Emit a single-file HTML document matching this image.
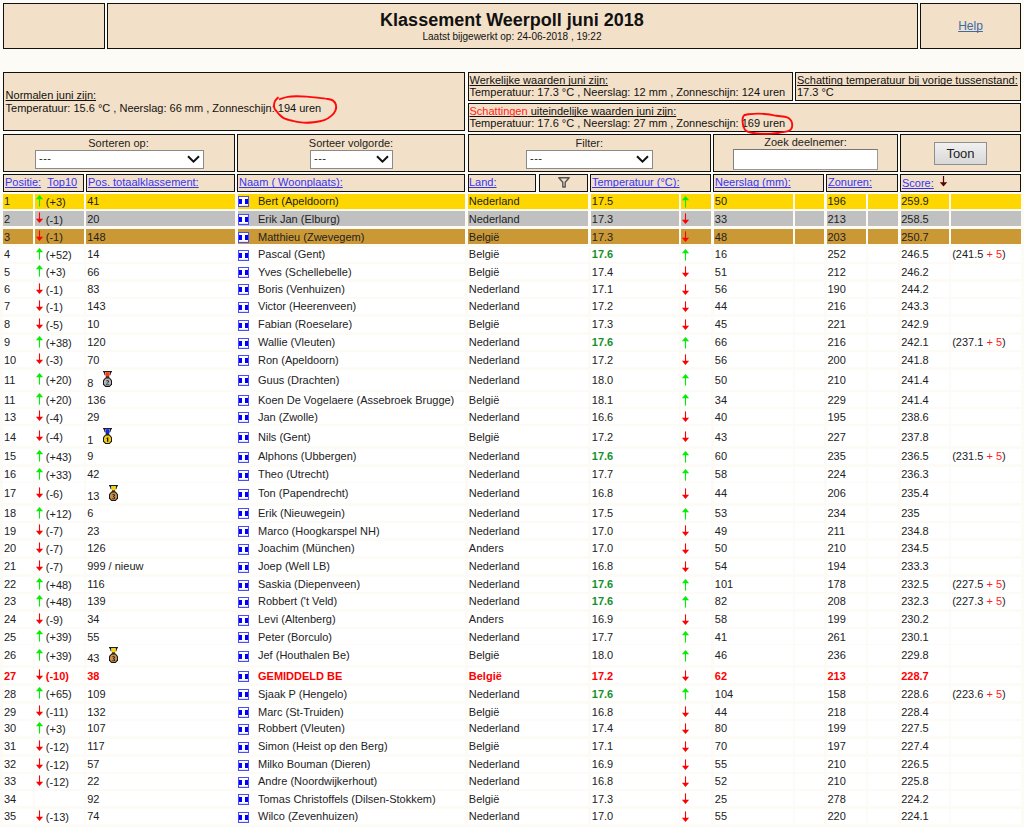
<!DOCTYPE html>
<html><head><meta charset="utf-8"><title>Klassement Weerpoll juni 2018</title>
<style>
html,body{margin:0;padding:0}
body{width:1024px;height:827px;overflow:hidden;background:#FDFBF6;font-family:"Liberation Sans", sans-serif;position:relative}
.b{position:absolute;box-sizing:border-box;border:1px solid #111}
.r{position:absolute}
.t{position:absolute;white-space:nowrap;font-family:"Liberation Sans", sans-serif}
.t a{text-decoration:underline;color:inherit}
.t{text-decoration-skip-ink:none}
.sel{position:absolute;box-sizing:border-box;background:#fff;border:1px solid #8a8a8a;font-size:11px;color:#222;font-family:"Liberation Sans", sans-serif}
.inp{position:absolute;box-sizing:border-box;background:#fff;border:1px solid #999;border-top-color:#777;border-left-color:#808080}
.btn{position:absolute;box-sizing:border-box;border:1px solid #8f8f8f;background:linear-gradient(#f0f0f0,#d8d8d8);font-size:13px;line-height:21px;text-align:center;color:#222;font-family:"Liberation Sans", sans-serif}
</style></head><body>
<div class="b" style="left:3px;top:3px;width:102px;height:46px;background:#F3E0C8;border-color:#111;"></div>
<div class="b" style="left:107px;top:3px;width:811px;height:46px;background:#F3E0C8;border-color:#111;"></div>
<div class="b" style="left:920px;top:3px;width:101px;height:46px;background:#F3E0C8;border-color:#111;"></div>
<div class="t" style="left:212.0px;top:10px;width:600px;text-align:center;font-size:18px;line-height:20px;color:#111;font-weight:bold;">Klassement Weerpoll juni 2018</div>
<div class="t" style="left:312.0px;top:30.5px;width:400px;text-align:center;font-size:10px;line-height:11px;color:#111;">Laatst bijgewerkt op: 24-06-2018 , 19:22</div>
<div class="t" style="left:920.5px;top:19px;width:100px;text-align:center;font-size:12px;line-height:14px;color:#3A6BA8;text-decoration:underline;">Help</div>
<div class="b" style="left:3px;top:72px;width:462px;height:59px;background:#F3E0C8;border-color:#111;"></div>
<div class="t" style="left:5.6px;top:89px;font-size:11px;line-height:12px;color:#111;text-decoration:underline;">Normalen juni zijn:</div>
<div class="t" style="left:5.6px;top:102px;font-size:11px;line-height:12px;color:#111;">Temperatuur: 15.6 °C , Neerslag: 66 mm , Zonneschijn: 194 uren</div>
<div class="b" style="left:468px;top:72px;width:325px;height:29px;background:#F3E0C8;border-color:#111;"></div>
<div class="t" style="left:469.5px;top:74px;font-size:11px;line-height:12px;color:#111;text-decoration:underline;">Werkelijke waarden juni zijn:</div>
<div class="t" style="left:469.5px;top:86px;font-size:11px;line-height:12px;color:#111;">Temperatuur: 17.3 °C , Neerslag: 12 mm , Zonneschijn: 124 uren</div>
<div class="b" style="left:795px;top:72px;width:226px;height:29px;background:#F3E0C8;border-color:#111;"></div>
<div class="t" style="left:797px;top:74px;font-size:11px;line-height:12px;color:#111;text-decoration:underline;">Schatting temperatuur bij vorige tussenstand:</div>
<div class="t" style="left:797px;top:86px;font-size:11px;line-height:12px;color:#111;">17.3 °C</div>
<div class="b" style="left:468px;top:103px;width:553px;height:29px;background:#F3E0C8;border-color:#111;"></div>
<div class="t" style="left:469.5px;top:105px;font-size:11px;line-height:12px;color:#111;text-decoration:underline;"><span style="color:#FF2020">Schattingen</span> uiteindelijke waarden juni zijn:</div>
<div class="t" style="left:469.5px;top:117px;font-size:11px;line-height:12px;color:#111;">Temperatuur: 17.6 °C , Neerslag: 27 mm , Zonneschijn: 169 uren</div>
<div class="b" style="left:3px;top:134px;width:232px;height:38px;background:#F3E0C8;border-color:#111;"></div>
<div class="t" style="left:-31.5px;top:137px;width:300px;text-align:center;font-size:11px;line-height:12px;color:#222;">Sorteren op:</div>
<div class="sel" style="left:35px;top:150px;width:169px;height:19px"><span style="position:absolute;left:3px;top:0px;line-height:14px;letter-spacing:0.5px">---</span><svg style="position:absolute;right:3.5px;top:4px" width="13" height="8" viewBox="0 0 13 8"><path d="M1 1.2 L6.5 6.6 L12 1.2" fill="none" stroke="#111" stroke-width="2"/></svg></div>
<div class="b" style="left:237px;top:134px;width:228px;height:38px;background:#F3E0C8;border-color:#111;"></div>
<div class="t" style="left:201.0px;top:137px;width:300px;text-align:center;font-size:11px;line-height:12px;color:#222;">Sorteer volgorde:</div>
<div class="sel" style="left:310px;top:150px;width:83px;height:19px"><span style="position:absolute;left:3px;top:0px;line-height:14px;letter-spacing:0.5px">---</span><svg style="position:absolute;right:3.5px;top:4px" width="13" height="8" viewBox="0 0 13 8"><path d="M1 1.2 L6.5 6.6 L12 1.2" fill="none" stroke="#111" stroke-width="2"/></svg></div>
<div class="b" style="left:468px;top:134px;width:243px;height:38px;background:#F3E0C8;border-color:#111;"></div>
<div class="t" style="left:439.29999999999995px;top:137px;width:300px;text-align:center;font-size:11px;line-height:12px;color:#222;">Filter:</div>
<div class="sel" style="left:526px;top:150px;width:127px;height:19px"><span style="position:absolute;left:3px;top:0px;line-height:14px;letter-spacing:0.5px">---</span><svg style="position:absolute;right:3.5px;top:4px" width="13" height="8" viewBox="0 0 13 8"><path d="M1 1.2 L6.5 6.6 L12 1.2" fill="none" stroke="#111" stroke-width="2"/></svg></div>
<div class="b" style="left:713px;top:134px;width:185px;height:38px;background:#F3E0C8;border-color:#111;"></div>
<div class="t" style="left:655.5px;top:136px;width:300px;text-align:center;font-size:11px;line-height:12px;color:#222;">Zoek deelnemer:</div>
<div class="inp" style="left:733px;top:149px;width:145px;height:21px"></div>
<div class="b" style="left:900px;top:134px;width:121px;height:38px;background:#F3E0C8;border-color:#111;"></div>
<div class="btn" style="left:934px;top:142px;width:53px;height:23px">Toon</div>
<div class="b" style="left:3px;top:174px;width:81px;height:18px;background:#F3E0C8;border-color:#111;"></div>
<div class="t" style="left:5px;top:176px;font-size:11px;line-height:12px;color:#3535F8;"><a>Positie:</a>&nbsp;&nbsp;<a>Top10</a></div>
<div class="b" style="left:86px;top:174px;width:149px;height:18px;background:#F3E0C8;border-color:#111;"></div>
<div class="t" style="left:88px;top:176px;font-size:11px;line-height:12px;color:#3535F8;text-decoration:underline;">Pos. totaalklassement:</div>
<div class="b" style="left:237px;top:174px;width:228px;height:18px;background:#F3E0C8;border-color:#111;"></div>
<div class="t" style="left:239px;top:176px;font-size:11px;line-height:12px;color:#3535F8;text-decoration:underline;">Naam ( Woonplaats):</div>
<div class="b" style="left:468px;top:174px;width:68px;height:18px;background:#F3E0C8;border-color:#111;"></div>
<div class="t" style="left:469px;top:176px;font-size:11px;line-height:12px;color:#3535F8;text-decoration:underline;">Land:</div>
<div class="b" style="left:539px;top:174px;width:49px;height:18px;background:#F3E0C8;border-color:#111;"></div>
<svg class="r" style="left:558px;top:177px" width="12" height="11" viewBox="0 0 12 11"><path d="M0.8 0.8 H11.2 L7.2 5.2 V10 H4.8 V5.2 Z" fill="none" stroke="#555" stroke-width="1.4" stroke-linejoin="round"/></svg>
<div class="b" style="left:590px;top:174px;width:121px;height:18px;background:#F3E0C8;border-color:#111;"></div>
<div class="t" style="left:592px;top:176px;font-size:11px;line-height:12px;color:#3535F8;text-decoration:underline;">Temperatuur (°C):</div>
<div class="b" style="left:713px;top:174px;width:111px;height:18px;background:#F3E0C8;border-color:#111;"></div>
<div class="t" style="left:715px;top:176px;font-size:11px;line-height:12px;color:#3535F8;text-decoration:underline;">Neerslag (mm):</div>
<div class="b" style="left:826px;top:174px;width:72px;height:18px;background:#F3E0C8;border-color:#111;"></div>
<div class="t" style="left:828px;top:176px;font-size:11px;line-height:12px;color:#3535F8;text-decoration:underline;">Zonuren:</div>
<div class="b" style="left:900px;top:174px;width:121px;height:18px;background:#F3E0C8;border-color:#111;"></div>
<div class="t" style="left:902px;top:177px;font-size:11px;line-height:12px;color:#3535F8;text-decoration:underline;">Score:</div>
<svg class="r" style="left:939px;top:176px" width="9" height="11" viewBox="0 0 9 11"><path d="M4.5 0 V7" stroke="#5A0000" stroke-width="1.2"/><path d="M0.8 6.3 L4.5 10.6 L8.2 6.3 Z" fill="#5A0000"/></svg>
<div class="r" style="left:3px;top:194px;width:30.0px;height:15px;background:#FFD700;"></div>
<div class="r" style="left:35px;top:194px;width:49.0px;height:15px;background:#FFD700;"></div>
<div class="r" style="left:86px;top:194px;width:148.5px;height:15px;background:#FFD700;"></div>
<div class="r" style="left:237.5px;top:194px;width:227.5px;height:15px;background:#FFD700;"></div>
<div class="r" style="left:468px;top:194px;width:120.0px;height:15px;background:#FFD700;"></div>
<div class="r" style="left:590.8px;top:194px;width:88.5px;height:15px;background:#FFD700;"></div>
<div class="r" style="left:681.2px;top:194px;width:29.5px;height:15px;background:#FFD700;"></div>
<div class="r" style="left:713.7px;top:194px;width:79.5px;height:15px;background:#FFD700;"></div>
<div class="r" style="left:795.2px;top:194px;width:28.5px;height:15px;background:#FFD700;"></div>
<div class="r" style="left:826.6px;top:194px;width:39.5px;height:15px;background:#FFD700;"></div>
<div class="r" style="left:868.3px;top:194px;width:29.5px;height:15px;background:#FFD700;"></div>
<div class="r" style="left:900.5px;top:194px;width:48.5px;height:15px;background:#FFD700;"></div>
<div class="r" style="left:951.3px;top:194px;width:69.5px;height:15px;background:#FFD700;"></div>
<div class="t" style="left:4px;top:195px;font-size:11px;line-height:12px;color:#222;">1</div>
<svg class="r" style="left:35px;top:195px" width="9" height="12" viewBox="0 0 9 12"><path d="M4.5 3 V11.6" stroke="#00F000" stroke-width="1.1"/><path d="M0.9 4.3 L4.5 0.1 L8.1 4.3 Z" fill="#00F000"/></svg>
<div class="t" style="left:45.8px;top:196px;font-size:11px;line-height:12px;color:#222;">(+3)</div>
<div class="t" style="left:87.2px;top:195px;font-size:11px;line-height:12px;color:#222;">41</div>
<svg class="r" style="left:238px;top:196px" width="11" height="11" viewBox="0 0 11 11" shape-rendering="crispEdges"><rect x="0" y="0" width="11" height="11" fill="#4A4AFF"/><rect x="1" y="1" width="9" height="9" fill="#0000FA"/><rect x="1" y="1" width="9" height="2" fill="#fff"/><rect x="1" y="2" width="1" height="1" fill="#E8E8FF"/><rect x="9" y="2" width="1" height="1" fill="#E8E8FF"/><rect x="4" y="3" width="3" height="5" fill="#fff"/><rect x="1" y="8" width="9" height="2" fill="#fff"/><rect x="1" y="9" width="9" height="1" fill="#E0E0FF"/></svg>
<div class="t" style="left:258px;top:195px;font-size:11px;line-height:12px;color:#222;">Bert (Apeldoorn)</div>
<div class="t" style="left:468.8px;top:195px;font-size:11px;line-height:12px;color:#222;">Nederland</div>
<div class="t" style="left:591.8px;top:195px;font-size:11px;line-height:12px;color:#222;">17.5</div>
<svg class="r" style="left:681px;top:196px" width="9" height="12" viewBox="0 0 9 12"><path d="M4.5 3 V11.6" stroke="#00F000" stroke-width="1.1"/><path d="M0.9 4.3 L4.5 0.1 L8.1 4.3 Z" fill="#00F000"/></svg>
<div class="t" style="left:714.8px;top:195px;font-size:11px;line-height:12px;color:#222;">50</div>
<div class="t" style="left:827.5px;top:195px;font-size:11px;line-height:12px;color:#222;">196</div>
<div class="t" style="left:901.2px;top:195px;font-size:11px;line-height:12px;color:#222;">259.9</div>
<div class="r" style="left:3px;top:211px;width:30.0px;height:15px;background:#C0C0C0;"></div>
<div class="r" style="left:35px;top:211px;width:49.0px;height:15px;background:#C0C0C0;"></div>
<div class="r" style="left:86px;top:211px;width:148.5px;height:15px;background:#C0C0C0;"></div>
<div class="r" style="left:237.5px;top:211px;width:227.5px;height:15px;background:#C0C0C0;"></div>
<div class="r" style="left:468px;top:211px;width:120.0px;height:15px;background:#C0C0C0;"></div>
<div class="r" style="left:590.8px;top:211px;width:88.5px;height:15px;background:#C0C0C0;"></div>
<div class="r" style="left:681.2px;top:211px;width:29.5px;height:15px;background:#C0C0C0;"></div>
<div class="r" style="left:713.7px;top:211px;width:79.5px;height:15px;background:#C0C0C0;"></div>
<div class="r" style="left:795.2px;top:211px;width:28.5px;height:15px;background:#C0C0C0;"></div>
<div class="r" style="left:826.6px;top:211px;width:39.5px;height:15px;background:#C0C0C0;"></div>
<div class="r" style="left:868.3px;top:211px;width:29.5px;height:15px;background:#C0C0C0;"></div>
<div class="r" style="left:900.5px;top:211px;width:48.5px;height:15px;background:#C0C0C0;"></div>
<div class="r" style="left:951.3px;top:211px;width:69.5px;height:15px;background:#C0C0C0;"></div>
<div class="t" style="left:4px;top:213px;font-size:11px;line-height:12px;color:#222;">2</div>
<svg class="r" style="left:35px;top:212px" width="9" height="12" viewBox="0 0 9 12"><path d="M4.5 0.4 V8" stroke="#FF0000" stroke-width="1.1"/><path d="M0.9 6.8 L4.5 11 L8.1 6.8 Z" fill="#FF0000"/></svg>
<div class="t" style="left:45.8px;top:214px;font-size:11px;line-height:12px;color:#222;">(-1)</div>
<div class="t" style="left:87.2px;top:213px;font-size:11px;line-height:12px;color:#222;">20</div>
<svg class="r" style="left:238px;top:214px" width="11" height="11" viewBox="0 0 11 11" shape-rendering="crispEdges"><rect x="0" y="0" width="11" height="11" fill="#4A4AFF"/><rect x="1" y="1" width="9" height="9" fill="#0000FA"/><rect x="1" y="1" width="9" height="2" fill="#fff"/><rect x="1" y="2" width="1" height="1" fill="#E8E8FF"/><rect x="9" y="2" width="1" height="1" fill="#E8E8FF"/><rect x="4" y="3" width="3" height="5" fill="#fff"/><rect x="1" y="8" width="9" height="2" fill="#fff"/><rect x="1" y="9" width="9" height="1" fill="#E0E0FF"/></svg>
<div class="t" style="left:258px;top:213px;font-size:11px;line-height:12px;color:#222;">Erik Jan (Elburg)</div>
<div class="t" style="left:468.8px;top:213px;font-size:11px;line-height:12px;color:#222;">Nederland</div>
<div class="t" style="left:591.8px;top:213px;font-size:11px;line-height:12px;color:#222;">17.3</div>
<svg class="r" style="left:681px;top:213px" width="9" height="12" viewBox="0 0 9 12"><path d="M4.5 0.4 V8" stroke="#FF0000" stroke-width="1.1"/><path d="M0.9 6.8 L4.5 11 L8.1 6.8 Z" fill="#FF0000"/></svg>
<div class="t" style="left:714.8px;top:213px;font-size:11px;line-height:12px;color:#222;">33</div>
<div class="t" style="left:827.5px;top:213px;font-size:11px;line-height:12px;color:#222;">213</div>
<div class="t" style="left:901.2px;top:213px;font-size:11px;line-height:12px;color:#222;">258.5</div>
<div class="r" style="left:3px;top:229px;width:30.0px;height:15px;background:#CB9836;"></div>
<div class="r" style="left:35px;top:229px;width:49.0px;height:15px;background:#CB9836;"></div>
<div class="r" style="left:86px;top:229px;width:148.5px;height:15px;background:#CB9836;"></div>
<div class="r" style="left:237.5px;top:229px;width:227.5px;height:15px;background:#CB9836;"></div>
<div class="r" style="left:468px;top:229px;width:120.0px;height:15px;background:#CB9836;"></div>
<div class="r" style="left:590.8px;top:229px;width:88.5px;height:15px;background:#CB9836;"></div>
<div class="r" style="left:681.2px;top:229px;width:29.5px;height:15px;background:#CB9836;"></div>
<div class="r" style="left:713.7px;top:229px;width:79.5px;height:15px;background:#CB9836;"></div>
<div class="r" style="left:795.2px;top:229px;width:28.5px;height:15px;background:#CB9836;"></div>
<div class="r" style="left:826.6px;top:229px;width:39.5px;height:15px;background:#CB9836;"></div>
<div class="r" style="left:868.3px;top:229px;width:29.5px;height:15px;background:#CB9836;"></div>
<div class="r" style="left:900.5px;top:229px;width:48.5px;height:15px;background:#CB9836;"></div>
<div class="r" style="left:951.3px;top:229px;width:69.5px;height:15px;background:#CB9836;"></div>
<div class="t" style="left:4px;top:231px;font-size:11px;line-height:12px;color:#222;">3</div>
<svg class="r" style="left:35px;top:230px" width="9" height="12" viewBox="0 0 9 12"><path d="M4.5 0.4 V8" stroke="#FF0000" stroke-width="1.1"/><path d="M0.9 6.8 L4.5 11 L8.1 6.8 Z" fill="#FF0000"/></svg>
<div class="t" style="left:45.8px;top:231px;font-size:11px;line-height:12px;color:#222;">(-1)</div>
<div class="t" style="left:87.2px;top:231px;font-size:11px;line-height:12px;color:#222;">148</div>
<svg class="r" style="left:238px;top:232px" width="11" height="11" viewBox="0 0 11 11" shape-rendering="crispEdges"><rect x="0" y="0" width="11" height="11" fill="#4A4AFF"/><rect x="1" y="1" width="9" height="9" fill="#0000FA"/><rect x="1" y="1" width="9" height="2" fill="#fff"/><rect x="1" y="2" width="1" height="1" fill="#E8E8FF"/><rect x="9" y="2" width="1" height="1" fill="#E8E8FF"/><rect x="4" y="3" width="3" height="5" fill="#fff"/><rect x="1" y="8" width="9" height="2" fill="#fff"/><rect x="1" y="9" width="9" height="1" fill="#E0E0FF"/></svg>
<div class="t" style="left:258px;top:231px;font-size:11px;line-height:12px;color:#222;">Matthieu (Zwevegem)</div>
<div class="t" style="left:468.8px;top:231px;font-size:11px;line-height:12px;color:#222;">België</div>
<div class="t" style="left:591.8px;top:231px;font-size:11px;line-height:12px;color:#222;">17.3</div>
<svg class="r" style="left:681px;top:231px" width="9" height="12" viewBox="0 0 9 12"><path d="M4.5 0.4 V8" stroke="#FF0000" stroke-width="1.1"/><path d="M0.9 6.8 L4.5 11 L8.1 6.8 Z" fill="#FF0000"/></svg>
<div class="t" style="left:714.8px;top:231px;font-size:11px;line-height:12px;color:#222;">48</div>
<div class="t" style="left:827.5px;top:231px;font-size:11px;line-height:12px;color:#222;">203</div>
<div class="t" style="left:901.2px;top:231px;font-size:11px;line-height:12px;color:#222;">250.7</div>
<div class="r" style="left:3px;top:247px;width:30.0px;height:15px;background:#FFFFFF;"></div>
<div class="r" style="left:35px;top:247px;width:49.0px;height:15px;background:#FFFFFF;"></div>
<div class="r" style="left:86px;top:247px;width:148.5px;height:15px;background:#FFFFFF;"></div>
<div class="r" style="left:237.5px;top:247px;width:227.5px;height:15px;background:#FFFFFF;"></div>
<div class="r" style="left:468px;top:247px;width:120.0px;height:15px;background:#FFFFFF;"></div>
<div class="r" style="left:590.8px;top:247px;width:88.5px;height:15px;background:#FFFFFF;"></div>
<div class="r" style="left:681.2px;top:247px;width:29.5px;height:15px;background:#FFFFFF;"></div>
<div class="r" style="left:713.7px;top:247px;width:79.5px;height:15px;background:#FFFFFF;"></div>
<div class="r" style="left:795.2px;top:247px;width:28.5px;height:15px;background:#FFFFFF;"></div>
<div class="r" style="left:826.6px;top:247px;width:39.5px;height:15px;background:#FFFFFF;"></div>
<div class="r" style="left:868.3px;top:247px;width:29.5px;height:15px;background:#FFFFFF;"></div>
<div class="r" style="left:900.5px;top:247px;width:48.5px;height:15px;background:#FFFFFF;"></div>
<div class="r" style="left:951.3px;top:247px;width:69.5px;height:15px;background:#FFFFFF;"></div>
<div class="t" style="left:4px;top:248px;font-size:11px;line-height:12px;color:#222;">4</div>
<svg class="r" style="left:35px;top:248px" width="9" height="12" viewBox="0 0 9 12"><path d="M4.5 3 V11.6" stroke="#00F000" stroke-width="1.1"/><path d="M0.9 4.3 L4.5 0.1 L8.1 4.3 Z" fill="#00F000"/></svg>
<div class="t" style="left:45.8px;top:249px;font-size:11px;line-height:12px;color:#222;">(+52)</div>
<div class="t" style="left:87.2px;top:248px;font-size:11px;line-height:12px;color:#222;">14</div>
<svg class="r" style="left:238px;top:250px" width="11" height="11" viewBox="0 0 11 11" shape-rendering="crispEdges"><rect x="0" y="0" width="11" height="11" fill="#4A4AFF"/><rect x="1" y="1" width="9" height="9" fill="#0000FA"/><rect x="1" y="1" width="9" height="2" fill="#fff"/><rect x="1" y="2" width="1" height="1" fill="#E8E8FF"/><rect x="9" y="2" width="1" height="1" fill="#E8E8FF"/><rect x="4" y="3" width="3" height="5" fill="#fff"/><rect x="1" y="8" width="9" height="2" fill="#fff"/><rect x="1" y="9" width="9" height="1" fill="#E0E0FF"/></svg>
<div class="t" style="left:258px;top:248px;font-size:11px;line-height:12px;color:#222;">Pascal (Gent)</div>
<div class="t" style="left:468.8px;top:248px;font-size:11px;line-height:12px;color:#222;">België</div>
<div class="t" style="left:591.8px;top:248px;font-size:11px;line-height:12px;color:#15902A;font-weight:bold;">17.6</div>
<svg class="r" style="left:681px;top:249px" width="9" height="12" viewBox="0 0 9 12"><path d="M4.5 3 V11.6" stroke="#00F000" stroke-width="1.1"/><path d="M0.9 4.3 L4.5 0.1 L8.1 4.3 Z" fill="#00F000"/></svg>
<div class="t" style="left:714.8px;top:248px;font-size:11px;line-height:12px;color:#222;">16</div>
<div class="t" style="left:827.5px;top:248px;font-size:11px;line-height:12px;color:#222;">252</div>
<div class="t" style="left:901.2px;top:248px;font-size:11px;line-height:12px;color:#222;">246.5</div>
<div class="t" style="left:952.2px;top:248px;font-size:11px;line-height:12px;color:#222;">(241.5 <span style="color:#FF2020">+ 5</span>)</div>
<div class="r" style="left:3px;top:264px;width:30.0px;height:15px;background:#FFFFFF;"></div>
<div class="r" style="left:35px;top:264px;width:49.0px;height:15px;background:#FFFFFF;"></div>
<div class="r" style="left:86px;top:264px;width:148.5px;height:15px;background:#FFFFFF;"></div>
<div class="r" style="left:237.5px;top:264px;width:227.5px;height:15px;background:#FFFFFF;"></div>
<div class="r" style="left:468px;top:264px;width:120.0px;height:15px;background:#FFFFFF;"></div>
<div class="r" style="left:590.8px;top:264px;width:88.5px;height:15px;background:#FFFFFF;"></div>
<div class="r" style="left:681.2px;top:264px;width:29.5px;height:15px;background:#FFFFFF;"></div>
<div class="r" style="left:713.7px;top:264px;width:79.5px;height:15px;background:#FFFFFF;"></div>
<div class="r" style="left:795.2px;top:264px;width:28.5px;height:15px;background:#FFFFFF;"></div>
<div class="r" style="left:826.6px;top:264px;width:39.5px;height:15px;background:#FFFFFF;"></div>
<div class="r" style="left:868.3px;top:264px;width:29.5px;height:15px;background:#FFFFFF;"></div>
<div class="r" style="left:900.5px;top:264px;width:48.5px;height:15px;background:#FFFFFF;"></div>
<div class="r" style="left:951.3px;top:264px;width:69.5px;height:15px;background:#FFFFFF;"></div>
<div class="t" style="left:4px;top:266px;font-size:11px;line-height:12px;color:#222;">5</div>
<svg class="r" style="left:35px;top:265px" width="9" height="12" viewBox="0 0 9 12"><path d="M4.5 3 V11.6" stroke="#00F000" stroke-width="1.1"/><path d="M0.9 4.3 L4.5 0.1 L8.1 4.3 Z" fill="#00F000"/></svg>
<div class="t" style="left:45.8px;top:266px;font-size:11px;line-height:12px;color:#222;">(+3)</div>
<div class="t" style="left:87.2px;top:266px;font-size:11px;line-height:12px;color:#222;">66</div>
<svg class="r" style="left:238px;top:267px" width="11" height="11" viewBox="0 0 11 11" shape-rendering="crispEdges"><rect x="0" y="0" width="11" height="11" fill="#4A4AFF"/><rect x="1" y="1" width="9" height="9" fill="#0000FA"/><rect x="1" y="1" width="9" height="2" fill="#fff"/><rect x="1" y="2" width="1" height="1" fill="#E8E8FF"/><rect x="9" y="2" width="1" height="1" fill="#E8E8FF"/><rect x="4" y="3" width="3" height="5" fill="#fff"/><rect x="1" y="8" width="9" height="2" fill="#fff"/><rect x="1" y="9" width="9" height="1" fill="#E0E0FF"/></svg>
<div class="t" style="left:258px;top:266px;font-size:11px;line-height:12px;color:#222;">Yves (Schellebelle)</div>
<div class="t" style="left:468.8px;top:266px;font-size:11px;line-height:12px;color:#222;">België</div>
<div class="t" style="left:591.8px;top:266px;font-size:11px;line-height:12px;color:#222;">17.4</div>
<svg class="r" style="left:681px;top:266px" width="9" height="12" viewBox="0 0 9 12"><path d="M4.5 0.4 V8" stroke="#FF0000" stroke-width="1.1"/><path d="M0.9 6.8 L4.5 11 L8.1 6.8 Z" fill="#FF0000"/></svg>
<div class="t" style="left:714.8px;top:266px;font-size:11px;line-height:12px;color:#222;">51</div>
<div class="t" style="left:827.5px;top:266px;font-size:11px;line-height:12px;color:#222;">212</div>
<div class="t" style="left:901.2px;top:266px;font-size:11px;line-height:12px;color:#222;">246.2</div>
<div class="r" style="left:3px;top:282px;width:30.0px;height:15px;background:#FFFFFF;"></div>
<div class="r" style="left:35px;top:282px;width:49.0px;height:15px;background:#FFFFFF;"></div>
<div class="r" style="left:86px;top:282px;width:148.5px;height:15px;background:#FFFFFF;"></div>
<div class="r" style="left:237.5px;top:282px;width:227.5px;height:15px;background:#FFFFFF;"></div>
<div class="r" style="left:468px;top:282px;width:120.0px;height:15px;background:#FFFFFF;"></div>
<div class="r" style="left:590.8px;top:282px;width:88.5px;height:15px;background:#FFFFFF;"></div>
<div class="r" style="left:681.2px;top:282px;width:29.5px;height:15px;background:#FFFFFF;"></div>
<div class="r" style="left:713.7px;top:282px;width:79.5px;height:15px;background:#FFFFFF;"></div>
<div class="r" style="left:795.2px;top:282px;width:28.5px;height:15px;background:#FFFFFF;"></div>
<div class="r" style="left:826.6px;top:282px;width:39.5px;height:15px;background:#FFFFFF;"></div>
<div class="r" style="left:868.3px;top:282px;width:29.5px;height:15px;background:#FFFFFF;"></div>
<div class="r" style="left:900.5px;top:282px;width:48.5px;height:15px;background:#FFFFFF;"></div>
<div class="r" style="left:951.3px;top:282px;width:69.5px;height:15px;background:#FFFFFF;"></div>
<div class="t" style="left:4px;top:283px;font-size:11px;line-height:12px;color:#222;">6</div>
<svg class="r" style="left:35px;top:283px" width="9" height="12" viewBox="0 0 9 12"><path d="M4.5 0.4 V8" stroke="#FF0000" stroke-width="1.1"/><path d="M0.9 6.8 L4.5 11 L8.1 6.8 Z" fill="#FF0000"/></svg>
<div class="t" style="left:45.8px;top:284px;font-size:11px;line-height:12px;color:#222;">(-1)</div>
<div class="t" style="left:87.2px;top:283px;font-size:11px;line-height:12px;color:#222;">83</div>
<svg class="r" style="left:238px;top:284px" width="11" height="11" viewBox="0 0 11 11" shape-rendering="crispEdges"><rect x="0" y="0" width="11" height="11" fill="#4A4AFF"/><rect x="1" y="1" width="9" height="9" fill="#0000FA"/><rect x="1" y="1" width="9" height="2" fill="#fff"/><rect x="1" y="2" width="1" height="1" fill="#E8E8FF"/><rect x="9" y="2" width="1" height="1" fill="#E8E8FF"/><rect x="4" y="3" width="3" height="5" fill="#fff"/><rect x="1" y="8" width="9" height="2" fill="#fff"/><rect x="1" y="9" width="9" height="1" fill="#E0E0FF"/></svg>
<div class="t" style="left:258px;top:283px;font-size:11px;line-height:12px;color:#222;">Boris (Venhuizen)</div>
<div class="t" style="left:468.8px;top:283px;font-size:11px;line-height:12px;color:#222;">Nederland</div>
<div class="t" style="left:591.8px;top:283px;font-size:11px;line-height:12px;color:#222;">17.1</div>
<svg class="r" style="left:681px;top:284px" width="9" height="12" viewBox="0 0 9 12"><path d="M4.5 0.4 V8" stroke="#FF0000" stroke-width="1.1"/><path d="M0.9 6.8 L4.5 11 L8.1 6.8 Z" fill="#FF0000"/></svg>
<div class="t" style="left:714.8px;top:283px;font-size:11px;line-height:12px;color:#222;">56</div>
<div class="t" style="left:827.5px;top:283px;font-size:11px;line-height:12px;color:#222;">190</div>
<div class="t" style="left:901.2px;top:283px;font-size:11px;line-height:12px;color:#222;">244.2</div>
<div class="r" style="left:3px;top:299px;width:30.0px;height:15px;background:#FFFFFF;"></div>
<div class="r" style="left:35px;top:299px;width:49.0px;height:15px;background:#FFFFFF;"></div>
<div class="r" style="left:86px;top:299px;width:148.5px;height:15px;background:#FFFFFF;"></div>
<div class="r" style="left:237.5px;top:299px;width:227.5px;height:15px;background:#FFFFFF;"></div>
<div class="r" style="left:468px;top:299px;width:120.0px;height:15px;background:#FFFFFF;"></div>
<div class="r" style="left:590.8px;top:299px;width:88.5px;height:15px;background:#FFFFFF;"></div>
<div class="r" style="left:681.2px;top:299px;width:29.5px;height:15px;background:#FFFFFF;"></div>
<div class="r" style="left:713.7px;top:299px;width:79.5px;height:15px;background:#FFFFFF;"></div>
<div class="r" style="left:795.2px;top:299px;width:28.5px;height:15px;background:#FFFFFF;"></div>
<div class="r" style="left:826.6px;top:299px;width:39.5px;height:15px;background:#FFFFFF;"></div>
<div class="r" style="left:868.3px;top:299px;width:29.5px;height:15px;background:#FFFFFF;"></div>
<div class="r" style="left:900.5px;top:299px;width:48.5px;height:15px;background:#FFFFFF;"></div>
<div class="r" style="left:951.3px;top:299px;width:69.5px;height:15px;background:#FFFFFF;"></div>
<div class="t" style="left:4px;top:300px;font-size:11px;line-height:12px;color:#222;">7</div>
<svg class="r" style="left:35px;top:300px" width="9" height="12" viewBox="0 0 9 12"><path d="M4.5 0.4 V8" stroke="#FF0000" stroke-width="1.1"/><path d="M0.9 6.8 L4.5 11 L8.1 6.8 Z" fill="#FF0000"/></svg>
<div class="t" style="left:45.8px;top:301px;font-size:11px;line-height:12px;color:#222;">(-1)</div>
<div class="t" style="left:87.2px;top:300px;font-size:11px;line-height:12px;color:#222;">143</div>
<svg class="r" style="left:238px;top:302px" width="11" height="11" viewBox="0 0 11 11" shape-rendering="crispEdges"><rect x="0" y="0" width="11" height="11" fill="#4A4AFF"/><rect x="1" y="1" width="9" height="9" fill="#0000FA"/><rect x="1" y="1" width="9" height="2" fill="#fff"/><rect x="1" y="2" width="1" height="1" fill="#E8E8FF"/><rect x="9" y="2" width="1" height="1" fill="#E8E8FF"/><rect x="4" y="3" width="3" height="5" fill="#fff"/><rect x="1" y="8" width="9" height="2" fill="#fff"/><rect x="1" y="9" width="9" height="1" fill="#E0E0FF"/></svg>
<div class="t" style="left:258px;top:300px;font-size:11px;line-height:12px;color:#222;">Victor (Heerenveen)</div>
<div class="t" style="left:468.8px;top:300px;font-size:11px;line-height:12px;color:#222;">Nederland</div>
<div class="t" style="left:591.8px;top:300px;font-size:11px;line-height:12px;color:#222;">17.2</div>
<svg class="r" style="left:681px;top:301px" width="9" height="12" viewBox="0 0 9 12"><path d="M4.5 0.4 V8" stroke="#FF0000" stroke-width="1.1"/><path d="M0.9 6.8 L4.5 11 L8.1 6.8 Z" fill="#FF0000"/></svg>
<div class="t" style="left:714.8px;top:300px;font-size:11px;line-height:12px;color:#222;">44</div>
<div class="t" style="left:827.5px;top:300px;font-size:11px;line-height:12px;color:#222;">216</div>
<div class="t" style="left:901.2px;top:300px;font-size:11px;line-height:12px;color:#222;">243.3</div>
<div class="r" style="left:3px;top:317px;width:30.0px;height:15px;background:#FFFFFF;"></div>
<div class="r" style="left:35px;top:317px;width:49.0px;height:15px;background:#FFFFFF;"></div>
<div class="r" style="left:86px;top:317px;width:148.5px;height:15px;background:#FFFFFF;"></div>
<div class="r" style="left:237.5px;top:317px;width:227.5px;height:15px;background:#FFFFFF;"></div>
<div class="r" style="left:468px;top:317px;width:120.0px;height:15px;background:#FFFFFF;"></div>
<div class="r" style="left:590.8px;top:317px;width:88.5px;height:15px;background:#FFFFFF;"></div>
<div class="r" style="left:681.2px;top:317px;width:29.5px;height:15px;background:#FFFFFF;"></div>
<div class="r" style="left:713.7px;top:317px;width:79.5px;height:15px;background:#FFFFFF;"></div>
<div class="r" style="left:795.2px;top:317px;width:28.5px;height:15px;background:#FFFFFF;"></div>
<div class="r" style="left:826.6px;top:317px;width:39.5px;height:15px;background:#FFFFFF;"></div>
<div class="r" style="left:868.3px;top:317px;width:29.5px;height:15px;background:#FFFFFF;"></div>
<div class="r" style="left:900.5px;top:317px;width:48.5px;height:15px;background:#FFFFFF;"></div>
<div class="r" style="left:951.3px;top:317px;width:69.5px;height:15px;background:#FFFFFF;"></div>
<div class="t" style="left:4px;top:318px;font-size:11px;line-height:12px;color:#222;">8</div>
<svg class="r" style="left:35px;top:318px" width="9" height="12" viewBox="0 0 9 12"><path d="M4.5 0.4 V8" stroke="#FF0000" stroke-width="1.1"/><path d="M0.9 6.8 L4.5 11 L8.1 6.8 Z" fill="#FF0000"/></svg>
<div class="t" style="left:45.8px;top:319px;font-size:11px;line-height:12px;color:#222;">(-5)</div>
<div class="t" style="left:87.2px;top:318px;font-size:11px;line-height:12px;color:#222;">10</div>
<svg class="r" style="left:238px;top:320px" width="11" height="11" viewBox="0 0 11 11" shape-rendering="crispEdges"><rect x="0" y="0" width="11" height="11" fill="#4A4AFF"/><rect x="1" y="1" width="9" height="9" fill="#0000FA"/><rect x="1" y="1" width="9" height="2" fill="#fff"/><rect x="1" y="2" width="1" height="1" fill="#E8E8FF"/><rect x="9" y="2" width="1" height="1" fill="#E8E8FF"/><rect x="4" y="3" width="3" height="5" fill="#fff"/><rect x="1" y="8" width="9" height="2" fill="#fff"/><rect x="1" y="9" width="9" height="1" fill="#E0E0FF"/></svg>
<div class="t" style="left:258px;top:318px;font-size:11px;line-height:12px;color:#222;">Fabian (Roeselare)</div>
<div class="t" style="left:468.8px;top:318px;font-size:11px;line-height:12px;color:#222;">België</div>
<div class="t" style="left:591.8px;top:318px;font-size:11px;line-height:12px;color:#222;">17.3</div>
<svg class="r" style="left:681px;top:319px" width="9" height="12" viewBox="0 0 9 12"><path d="M4.5 0.4 V8" stroke="#FF0000" stroke-width="1.1"/><path d="M0.9 6.8 L4.5 11 L8.1 6.8 Z" fill="#FF0000"/></svg>
<div class="t" style="left:714.8px;top:318px;font-size:11px;line-height:12px;color:#222;">45</div>
<div class="t" style="left:827.5px;top:318px;font-size:11px;line-height:12px;color:#222;">221</div>
<div class="t" style="left:901.2px;top:318px;font-size:11px;line-height:12px;color:#222;">242.9</div>
<div class="r" style="left:3px;top:335px;width:30.0px;height:15px;background:#FFFFFF;"></div>
<div class="r" style="left:35px;top:335px;width:49.0px;height:15px;background:#FFFFFF;"></div>
<div class="r" style="left:86px;top:335px;width:148.5px;height:15px;background:#FFFFFF;"></div>
<div class="r" style="left:237.5px;top:335px;width:227.5px;height:15px;background:#FFFFFF;"></div>
<div class="r" style="left:468px;top:335px;width:120.0px;height:15px;background:#FFFFFF;"></div>
<div class="r" style="left:590.8px;top:335px;width:88.5px;height:15px;background:#FFFFFF;"></div>
<div class="r" style="left:681.2px;top:335px;width:29.5px;height:15px;background:#FFFFFF;"></div>
<div class="r" style="left:713.7px;top:335px;width:79.5px;height:15px;background:#FFFFFF;"></div>
<div class="r" style="left:795.2px;top:335px;width:28.5px;height:15px;background:#FFFFFF;"></div>
<div class="r" style="left:826.6px;top:335px;width:39.5px;height:15px;background:#FFFFFF;"></div>
<div class="r" style="left:868.3px;top:335px;width:29.5px;height:15px;background:#FFFFFF;"></div>
<div class="r" style="left:900.5px;top:335px;width:48.5px;height:15px;background:#FFFFFF;"></div>
<div class="r" style="left:951.3px;top:335px;width:69.5px;height:15px;background:#FFFFFF;"></div>
<div class="t" style="left:4px;top:336px;font-size:11px;line-height:12px;color:#222;">9</div>
<svg class="r" style="left:35px;top:336px" width="9" height="12" viewBox="0 0 9 12"><path d="M4.5 3 V11.6" stroke="#00F000" stroke-width="1.1"/><path d="M0.9 4.3 L4.5 0.1 L8.1 4.3 Z" fill="#00F000"/></svg>
<div class="t" style="left:45.8px;top:337px;font-size:11px;line-height:12px;color:#222;">(+38)</div>
<div class="t" style="left:87.2px;top:336px;font-size:11px;line-height:12px;color:#222;">120</div>
<svg class="r" style="left:238px;top:338px" width="11" height="11" viewBox="0 0 11 11" shape-rendering="crispEdges"><rect x="0" y="0" width="11" height="11" fill="#4A4AFF"/><rect x="1" y="1" width="9" height="9" fill="#0000FA"/><rect x="1" y="1" width="9" height="2" fill="#fff"/><rect x="1" y="2" width="1" height="1" fill="#E8E8FF"/><rect x="9" y="2" width="1" height="1" fill="#E8E8FF"/><rect x="4" y="3" width="3" height="5" fill="#fff"/><rect x="1" y="8" width="9" height="2" fill="#fff"/><rect x="1" y="9" width="9" height="1" fill="#E0E0FF"/></svg>
<div class="t" style="left:258px;top:336px;font-size:11px;line-height:12px;color:#222;">Wallie (Vleuten)</div>
<div class="t" style="left:468.8px;top:336px;font-size:11px;line-height:12px;color:#222;">Nederland</div>
<div class="t" style="left:591.8px;top:336px;font-size:11px;line-height:12px;color:#15902A;font-weight:bold;">17.6</div>
<svg class="r" style="left:681px;top:337px" width="9" height="12" viewBox="0 0 9 12"><path d="M4.5 3 V11.6" stroke="#00F000" stroke-width="1.1"/><path d="M0.9 4.3 L4.5 0.1 L8.1 4.3 Z" fill="#00F000"/></svg>
<div class="t" style="left:714.8px;top:336px;font-size:11px;line-height:12px;color:#222;">66</div>
<div class="t" style="left:827.5px;top:336px;font-size:11px;line-height:12px;color:#222;">216</div>
<div class="t" style="left:901.2px;top:336px;font-size:11px;line-height:12px;color:#222;">242.1</div>
<div class="t" style="left:952.2px;top:336px;font-size:11px;line-height:12px;color:#222;">(237.1 <span style="color:#FF2020">+ 5</span>)</div>
<div class="r" style="left:3px;top:352px;width:30.0px;height:15px;background:#FFFFFF;"></div>
<div class="r" style="left:35px;top:352px;width:49.0px;height:15px;background:#FFFFFF;"></div>
<div class="r" style="left:86px;top:352px;width:148.5px;height:15px;background:#FFFFFF;"></div>
<div class="r" style="left:237.5px;top:352px;width:227.5px;height:15px;background:#FFFFFF;"></div>
<div class="r" style="left:468px;top:352px;width:120.0px;height:15px;background:#FFFFFF;"></div>
<div class="r" style="left:590.8px;top:352px;width:88.5px;height:15px;background:#FFFFFF;"></div>
<div class="r" style="left:681.2px;top:352px;width:29.5px;height:15px;background:#FFFFFF;"></div>
<div class="r" style="left:713.7px;top:352px;width:79.5px;height:15px;background:#FFFFFF;"></div>
<div class="r" style="left:795.2px;top:352px;width:28.5px;height:15px;background:#FFFFFF;"></div>
<div class="r" style="left:826.6px;top:352px;width:39.5px;height:15px;background:#FFFFFF;"></div>
<div class="r" style="left:868.3px;top:352px;width:29.5px;height:15px;background:#FFFFFF;"></div>
<div class="r" style="left:900.5px;top:352px;width:48.5px;height:15px;background:#FFFFFF;"></div>
<div class="r" style="left:951.3px;top:352px;width:69.5px;height:15px;background:#FFFFFF;"></div>
<div class="t" style="left:4px;top:354px;font-size:11px;line-height:12px;color:#222;">10</div>
<svg class="r" style="left:35px;top:353px" width="9" height="12" viewBox="0 0 9 12"><path d="M4.5 0.4 V8" stroke="#FF0000" stroke-width="1.1"/><path d="M0.9 6.8 L4.5 11 L8.1 6.8 Z" fill="#FF0000"/></svg>
<div class="t" style="left:45.8px;top:354px;font-size:11px;line-height:12px;color:#222;">(-3)</div>
<div class="t" style="left:87.2px;top:354px;font-size:11px;line-height:12px;color:#222;">70</div>
<svg class="r" style="left:238px;top:355px" width="11" height="11" viewBox="0 0 11 11" shape-rendering="crispEdges"><rect x="0" y="0" width="11" height="11" fill="#4A4AFF"/><rect x="1" y="1" width="9" height="9" fill="#0000FA"/><rect x="1" y="1" width="9" height="2" fill="#fff"/><rect x="1" y="2" width="1" height="1" fill="#E8E8FF"/><rect x="9" y="2" width="1" height="1" fill="#E8E8FF"/><rect x="4" y="3" width="3" height="5" fill="#fff"/><rect x="1" y="8" width="9" height="2" fill="#fff"/><rect x="1" y="9" width="9" height="1" fill="#E0E0FF"/></svg>
<div class="t" style="left:258px;top:354px;font-size:11px;line-height:12px;color:#222;">Ron (Apeldoorn)</div>
<div class="t" style="left:468.8px;top:354px;font-size:11px;line-height:12px;color:#222;">Nederland</div>
<div class="t" style="left:591.8px;top:354px;font-size:11px;line-height:12px;color:#222;">17.2</div>
<svg class="r" style="left:681px;top:354px" width="9" height="12" viewBox="0 0 9 12"><path d="M4.5 0.4 V8" stroke="#FF0000" stroke-width="1.1"/><path d="M0.9 6.8 L4.5 11 L8.1 6.8 Z" fill="#FF0000"/></svg>
<div class="t" style="left:714.8px;top:354px;font-size:11px;line-height:12px;color:#222;">56</div>
<div class="t" style="left:827.5px;top:354px;font-size:11px;line-height:12px;color:#222;">200</div>
<div class="t" style="left:901.2px;top:354px;font-size:11px;line-height:12px;color:#222;">241.8</div>
<div class="r" style="left:3px;top:370px;width:30.0px;height:20px;background:#FFFFFF;"></div>
<div class="r" style="left:35px;top:370px;width:49.0px;height:20px;background:#FFFFFF;"></div>
<div class="r" style="left:86px;top:370px;width:148.5px;height:20px;background:#FFFFFF;"></div>
<div class="r" style="left:237.5px;top:370px;width:227.5px;height:20px;background:#FFFFFF;"></div>
<div class="r" style="left:468px;top:370px;width:120.0px;height:20px;background:#FFFFFF;"></div>
<div class="r" style="left:590.8px;top:370px;width:88.5px;height:20px;background:#FFFFFF;"></div>
<div class="r" style="left:681.2px;top:370px;width:29.5px;height:20px;background:#FFFFFF;"></div>
<div class="r" style="left:713.7px;top:370px;width:79.5px;height:20px;background:#FFFFFF;"></div>
<div class="r" style="left:795.2px;top:370px;width:28.5px;height:20px;background:#FFFFFF;"></div>
<div class="r" style="left:826.6px;top:370px;width:39.5px;height:20px;background:#FFFFFF;"></div>
<div class="r" style="left:868.3px;top:370px;width:29.5px;height:20px;background:#FFFFFF;"></div>
<div class="r" style="left:900.5px;top:370px;width:48.5px;height:20px;background:#FFFFFF;"></div>
<div class="r" style="left:951.3px;top:370px;width:69.5px;height:20px;background:#FFFFFF;"></div>
<div class="t" style="left:4px;top:374px;font-size:11px;line-height:12px;color:#222;">11</div>
<svg class="r" style="left:35px;top:373px" width="9" height="12" viewBox="0 0 9 12"><path d="M4.5 3 V11.6" stroke="#00F000" stroke-width="1.1"/><path d="M0.9 4.3 L4.5 0.1 L8.1 4.3 Z" fill="#00F000"/></svg>
<div class="t" style="left:45.8px;top:374px;font-size:11px;line-height:12px;color:#222;">(+20)</div>
<div class="t" style="left:87.2px;top:377px;font-size:11px;line-height:12px;color:#222;">8</div>
<svg class="r" style="left:103px;top:371px" width="9" height="16" viewBox="0 0 9 16"><rect x="0" y="0" width="9" height="1.3" fill="#222"/><path d="M0.8 1 H2 L2.6 4.2 H1.6 Z M7 1 H8.2 L7.4 4.2 H6.4 Z" fill="#111"/><rect x="2.6" y="1.2" width="3.8" height="4.6" fill="#FF3A12"/><rect x="3" y="5.4" width="3" height="1.4" fill="#111"/><path d="M2.4 6.6 H6.6 L9 9.2 V13.4 L6.6 16 H2.4 L0 13.4 V9.2 Z" fill="#151515"/><path d="M2.9 7.6 H6.1 L8 9.6 V13 L6.1 15 H2.9 L1 13 V9.6 Z" fill="#B4B8BC"/><path d="M3 9.8 C3.5 8.9 6 8.9 6 10.5 C6 11.5 4.2 12.3 3.2 13.6 H6.2 V14.3 H3 V13.4 C3.8 12.3 5 11.4 5 10.6 C5 9.8 3.9 9.8 3.5 10.4 Z" fill="#1a1a1a"/></svg>
<svg class="r" style="left:238px;top:375px" width="11" height="11" viewBox="0 0 11 11" shape-rendering="crispEdges"><rect x="0" y="0" width="11" height="11" fill="#4A4AFF"/><rect x="1" y="1" width="9" height="9" fill="#0000FA"/><rect x="1" y="1" width="9" height="2" fill="#fff"/><rect x="1" y="2" width="1" height="1" fill="#E8E8FF"/><rect x="9" y="2" width="1" height="1" fill="#E8E8FF"/><rect x="4" y="3" width="3" height="5" fill="#fff"/><rect x="1" y="8" width="9" height="2" fill="#fff"/><rect x="1" y="9" width="9" height="1" fill="#E0E0FF"/></svg>
<div class="t" style="left:258px;top:374px;font-size:11px;line-height:12px;color:#222;">Guus (Drachten)</div>
<div class="t" style="left:468.8px;top:374px;font-size:11px;line-height:12px;color:#222;">Nederland</div>
<div class="t" style="left:591.8px;top:374px;font-size:11px;line-height:12px;color:#222;">18.0</div>
<svg class="r" style="left:681px;top:374px" width="9" height="12" viewBox="0 0 9 12"><path d="M4.5 3 V11.6" stroke="#00F000" stroke-width="1.1"/><path d="M0.9 4.3 L4.5 0.1 L8.1 4.3 Z" fill="#00F000"/></svg>
<div class="t" style="left:714.8px;top:374px;font-size:11px;line-height:12px;color:#222;">50</div>
<div class="t" style="left:827.5px;top:374px;font-size:11px;line-height:12px;color:#222;">210</div>
<div class="t" style="left:901.2px;top:374px;font-size:11px;line-height:12px;color:#222;">241.4</div>
<div class="r" style="left:3px;top:392px;width:30.0px;height:15px;background:#FFFFFF;"></div>
<div class="r" style="left:35px;top:392px;width:49.0px;height:15px;background:#FFFFFF;"></div>
<div class="r" style="left:86px;top:392px;width:148.5px;height:15px;background:#FFFFFF;"></div>
<div class="r" style="left:237.5px;top:392px;width:227.5px;height:15px;background:#FFFFFF;"></div>
<div class="r" style="left:468px;top:392px;width:120.0px;height:15px;background:#FFFFFF;"></div>
<div class="r" style="left:590.8px;top:392px;width:88.5px;height:15px;background:#FFFFFF;"></div>
<div class="r" style="left:681.2px;top:392px;width:29.5px;height:15px;background:#FFFFFF;"></div>
<div class="r" style="left:713.7px;top:392px;width:79.5px;height:15px;background:#FFFFFF;"></div>
<div class="r" style="left:795.2px;top:392px;width:28.5px;height:15px;background:#FFFFFF;"></div>
<div class="r" style="left:826.6px;top:392px;width:39.5px;height:15px;background:#FFFFFF;"></div>
<div class="r" style="left:868.3px;top:392px;width:29.5px;height:15px;background:#FFFFFF;"></div>
<div class="r" style="left:900.5px;top:392px;width:48.5px;height:15px;background:#FFFFFF;"></div>
<div class="r" style="left:951.3px;top:392px;width:69.5px;height:15px;background:#FFFFFF;"></div>
<div class="t" style="left:4px;top:394px;font-size:11px;line-height:12px;color:#222;">11</div>
<svg class="r" style="left:35px;top:393px" width="9" height="12" viewBox="0 0 9 12"><path d="M4.5 3 V11.6" stroke="#00F000" stroke-width="1.1"/><path d="M0.9 4.3 L4.5 0.1 L8.1 4.3 Z" fill="#00F000"/></svg>
<div class="t" style="left:45.8px;top:394px;font-size:11px;line-height:12px;color:#222;">(+20)</div>
<div class="t" style="left:87.2px;top:394px;font-size:11px;line-height:12px;color:#222;">136</div>
<svg class="r" style="left:238px;top:395px" width="11" height="11" viewBox="0 0 11 11" shape-rendering="crispEdges"><rect x="0" y="0" width="11" height="11" fill="#4A4AFF"/><rect x="1" y="1" width="9" height="9" fill="#0000FA"/><rect x="1" y="1" width="9" height="2" fill="#fff"/><rect x="1" y="2" width="1" height="1" fill="#E8E8FF"/><rect x="9" y="2" width="1" height="1" fill="#E8E8FF"/><rect x="4" y="3" width="3" height="5" fill="#fff"/><rect x="1" y="8" width="9" height="2" fill="#fff"/><rect x="1" y="9" width="9" height="1" fill="#E0E0FF"/></svg>
<div class="t" style="left:258px;top:394px;font-size:11px;line-height:12px;color:#222;">Koen De Vogelaere (Assebroek Brugge)</div>
<div class="t" style="left:468.8px;top:394px;font-size:11px;line-height:12px;color:#222;">België</div>
<div class="t" style="left:591.8px;top:394px;font-size:11px;line-height:12px;color:#222;">18.1</div>
<svg class="r" style="left:681px;top:394px" width="9" height="12" viewBox="0 0 9 12"><path d="M4.5 3 V11.6" stroke="#00F000" stroke-width="1.1"/><path d="M0.9 4.3 L4.5 0.1 L8.1 4.3 Z" fill="#00F000"/></svg>
<div class="t" style="left:714.8px;top:394px;font-size:11px;line-height:12px;color:#222;">34</div>
<div class="t" style="left:827.5px;top:394px;font-size:11px;line-height:12px;color:#222;">229</div>
<div class="t" style="left:901.2px;top:394px;font-size:11px;line-height:12px;color:#222;">241.4</div>
<div class="r" style="left:3px;top:409px;width:30.0px;height:15px;background:#FFFFFF;"></div>
<div class="r" style="left:35px;top:409px;width:49.0px;height:15px;background:#FFFFFF;"></div>
<div class="r" style="left:86px;top:409px;width:148.5px;height:15px;background:#FFFFFF;"></div>
<div class="r" style="left:237.5px;top:409px;width:227.5px;height:15px;background:#FFFFFF;"></div>
<div class="r" style="left:468px;top:409px;width:120.0px;height:15px;background:#FFFFFF;"></div>
<div class="r" style="left:590.8px;top:409px;width:88.5px;height:15px;background:#FFFFFF;"></div>
<div class="r" style="left:681.2px;top:409px;width:29.5px;height:15px;background:#FFFFFF;"></div>
<div class="r" style="left:713.7px;top:409px;width:79.5px;height:15px;background:#FFFFFF;"></div>
<div class="r" style="left:795.2px;top:409px;width:28.5px;height:15px;background:#FFFFFF;"></div>
<div class="r" style="left:826.6px;top:409px;width:39.5px;height:15px;background:#FFFFFF;"></div>
<div class="r" style="left:868.3px;top:409px;width:29.5px;height:15px;background:#FFFFFF;"></div>
<div class="r" style="left:900.5px;top:409px;width:48.5px;height:15px;background:#FFFFFF;"></div>
<div class="r" style="left:951.3px;top:409px;width:69.5px;height:15px;background:#FFFFFF;"></div>
<div class="t" style="left:4px;top:411px;font-size:11px;line-height:12px;color:#222;">13</div>
<svg class="r" style="left:35px;top:410px" width="9" height="12" viewBox="0 0 9 12"><path d="M4.5 0.4 V8" stroke="#FF0000" stroke-width="1.1"/><path d="M0.9 6.8 L4.5 11 L8.1 6.8 Z" fill="#FF0000"/></svg>
<div class="t" style="left:45.8px;top:412px;font-size:11px;line-height:12px;color:#222;">(-4)</div>
<div class="t" style="left:87.2px;top:411px;font-size:11px;line-height:12px;color:#222;">29</div>
<svg class="r" style="left:238px;top:412px" width="11" height="11" viewBox="0 0 11 11" shape-rendering="crispEdges"><rect x="0" y="0" width="11" height="11" fill="#4A4AFF"/><rect x="1" y="1" width="9" height="9" fill="#0000FA"/><rect x="1" y="1" width="9" height="2" fill="#fff"/><rect x="1" y="2" width="1" height="1" fill="#E8E8FF"/><rect x="9" y="2" width="1" height="1" fill="#E8E8FF"/><rect x="4" y="3" width="3" height="5" fill="#fff"/><rect x="1" y="8" width="9" height="2" fill="#fff"/><rect x="1" y="9" width="9" height="1" fill="#E0E0FF"/></svg>
<div class="t" style="left:258px;top:411px;font-size:11px;line-height:12px;color:#222;">Jan (Zwolle)</div>
<div class="t" style="left:468.8px;top:411px;font-size:11px;line-height:12px;color:#222;">Nederland</div>
<div class="t" style="left:591.8px;top:411px;font-size:11px;line-height:12px;color:#222;">16.6</div>
<svg class="r" style="left:681px;top:411px" width="9" height="12" viewBox="0 0 9 12"><path d="M4.5 0.4 V8" stroke="#FF0000" stroke-width="1.1"/><path d="M0.9 6.8 L4.5 11 L8.1 6.8 Z" fill="#FF0000"/></svg>
<div class="t" style="left:714.8px;top:411px;font-size:11px;line-height:12px;color:#222;">40</div>
<div class="t" style="left:827.5px;top:411px;font-size:11px;line-height:12px;color:#222;">195</div>
<div class="t" style="left:901.2px;top:411px;font-size:11px;line-height:12px;color:#222;">238.6</div>
<div class="r" style="left:3px;top:426px;width:30.0px;height:20px;background:#FFFFFF;"></div>
<div class="r" style="left:35px;top:426px;width:49.0px;height:20px;background:#FFFFFF;"></div>
<div class="r" style="left:86px;top:426px;width:148.5px;height:20px;background:#FFFFFF;"></div>
<div class="r" style="left:237.5px;top:426px;width:227.5px;height:20px;background:#FFFFFF;"></div>
<div class="r" style="left:468px;top:426px;width:120.0px;height:20px;background:#FFFFFF;"></div>
<div class="r" style="left:590.8px;top:426px;width:88.5px;height:20px;background:#FFFFFF;"></div>
<div class="r" style="left:681.2px;top:426px;width:29.5px;height:20px;background:#FFFFFF;"></div>
<div class="r" style="left:713.7px;top:426px;width:79.5px;height:20px;background:#FFFFFF;"></div>
<div class="r" style="left:795.2px;top:426px;width:28.5px;height:20px;background:#FFFFFF;"></div>
<div class="r" style="left:826.6px;top:426px;width:39.5px;height:20px;background:#FFFFFF;"></div>
<div class="r" style="left:868.3px;top:426px;width:29.5px;height:20px;background:#FFFFFF;"></div>
<div class="r" style="left:900.5px;top:426px;width:48.5px;height:20px;background:#FFFFFF;"></div>
<div class="r" style="left:951.3px;top:426px;width:69.5px;height:20px;background:#FFFFFF;"></div>
<div class="t" style="left:4px;top:431px;font-size:11px;line-height:12px;color:#222;">14</div>
<svg class="r" style="left:35px;top:430px" width="9" height="12" viewBox="0 0 9 12"><path d="M4.5 0.4 V8" stroke="#FF0000" stroke-width="1.1"/><path d="M0.9 6.8 L4.5 11 L8.1 6.8 Z" fill="#FF0000"/></svg>
<div class="t" style="left:45.8px;top:431px;font-size:11px;line-height:12px;color:#222;">(-4)</div>
<div class="t" style="left:87.2px;top:434px;font-size:11px;line-height:12px;color:#222;">1</div>
<svg class="r" style="left:103px;top:428px" width="9" height="16" viewBox="0 0 9 16"><rect x="0" y="0" width="9" height="1.3" fill="#222"/><path d="M0.8 1 H2 L2.6 4.2 H1.6 Z M7 1 H8.2 L7.4 4.2 H6.4 Z" fill="#111"/><rect x="2.6" y="1.2" width="3.8" height="4.6" fill="#0A2AF5"/><rect x="3" y="5.4" width="3" height="1.4" fill="#111"/><path d="M2.4 6.6 H6.6 L9 9.2 V13.4 L6.6 16 H2.4 L0 13.4 V9.2 Z" fill="#151515"/><path d="M2.9 7.6 H6.1 L8 9.6 V13 L6.1 15 H2.9 L1 13 V9.6 Z" fill="#F2CC10"/><path d="M4 9.5 H5.3 V13.8 H4 Z M3 10.3 L4.2 9.5 V10.8 Z" fill="#1a1a1a"/></svg>
<svg class="r" style="left:238px;top:432px" width="11" height="11" viewBox="0 0 11 11" shape-rendering="crispEdges"><rect x="0" y="0" width="11" height="11" fill="#4A4AFF"/><rect x="1" y="1" width="9" height="9" fill="#0000FA"/><rect x="1" y="1" width="9" height="2" fill="#fff"/><rect x="1" y="2" width="1" height="1" fill="#E8E8FF"/><rect x="9" y="2" width="1" height="1" fill="#E8E8FF"/><rect x="4" y="3" width="3" height="5" fill="#fff"/><rect x="1" y="8" width="9" height="2" fill="#fff"/><rect x="1" y="9" width="9" height="1" fill="#E0E0FF"/></svg>
<div class="t" style="left:258px;top:431px;font-size:11px;line-height:12px;color:#222;">Nils (Gent)</div>
<div class="t" style="left:468.8px;top:431px;font-size:11px;line-height:12px;color:#222;">België</div>
<div class="t" style="left:591.8px;top:431px;font-size:11px;line-height:12px;color:#222;">17.2</div>
<svg class="r" style="left:681px;top:431px" width="9" height="12" viewBox="0 0 9 12"><path d="M4.5 0.4 V8" stroke="#FF0000" stroke-width="1.1"/><path d="M0.9 6.8 L4.5 11 L8.1 6.8 Z" fill="#FF0000"/></svg>
<div class="t" style="left:714.8px;top:431px;font-size:11px;line-height:12px;color:#222;">43</div>
<div class="t" style="left:827.5px;top:431px;font-size:11px;line-height:12px;color:#222;">227</div>
<div class="t" style="left:901.2px;top:431px;font-size:11px;line-height:12px;color:#222;">237.8</div>
<div class="r" style="left:3px;top:449px;width:30.0px;height:15px;background:#FFFFFF;"></div>
<div class="r" style="left:35px;top:449px;width:49.0px;height:15px;background:#FFFFFF;"></div>
<div class="r" style="left:86px;top:449px;width:148.5px;height:15px;background:#FFFFFF;"></div>
<div class="r" style="left:237.5px;top:449px;width:227.5px;height:15px;background:#FFFFFF;"></div>
<div class="r" style="left:468px;top:449px;width:120.0px;height:15px;background:#FFFFFF;"></div>
<div class="r" style="left:590.8px;top:449px;width:88.5px;height:15px;background:#FFFFFF;"></div>
<div class="r" style="left:681.2px;top:449px;width:29.5px;height:15px;background:#FFFFFF;"></div>
<div class="r" style="left:713.7px;top:449px;width:79.5px;height:15px;background:#FFFFFF;"></div>
<div class="r" style="left:795.2px;top:449px;width:28.5px;height:15px;background:#FFFFFF;"></div>
<div class="r" style="left:826.6px;top:449px;width:39.5px;height:15px;background:#FFFFFF;"></div>
<div class="r" style="left:868.3px;top:449px;width:29.5px;height:15px;background:#FFFFFF;"></div>
<div class="r" style="left:900.5px;top:449px;width:48.5px;height:15px;background:#FFFFFF;"></div>
<div class="r" style="left:951.3px;top:449px;width:69.5px;height:15px;background:#FFFFFF;"></div>
<div class="t" style="left:4px;top:450px;font-size:11px;line-height:12px;color:#222;">15</div>
<svg class="r" style="left:35px;top:450px" width="9" height="12" viewBox="0 0 9 12"><path d="M4.5 3 V11.6" stroke="#00F000" stroke-width="1.1"/><path d="M0.9 4.3 L4.5 0.1 L8.1 4.3 Z" fill="#00F000"/></svg>
<div class="t" style="left:45.8px;top:451px;font-size:11px;line-height:12px;color:#222;">(+43)</div>
<div class="t" style="left:87.2px;top:450px;font-size:11px;line-height:12px;color:#222;">9</div>
<svg class="r" style="left:238px;top:452px" width="11" height="11" viewBox="0 0 11 11" shape-rendering="crispEdges"><rect x="0" y="0" width="11" height="11" fill="#4A4AFF"/><rect x="1" y="1" width="9" height="9" fill="#0000FA"/><rect x="1" y="1" width="9" height="2" fill="#fff"/><rect x="1" y="2" width="1" height="1" fill="#E8E8FF"/><rect x="9" y="2" width="1" height="1" fill="#E8E8FF"/><rect x="4" y="3" width="3" height="5" fill="#fff"/><rect x="1" y="8" width="9" height="2" fill="#fff"/><rect x="1" y="9" width="9" height="1" fill="#E0E0FF"/></svg>
<div class="t" style="left:258px;top:450px;font-size:11px;line-height:12px;color:#222;">Alphons (Ubbergen)</div>
<div class="t" style="left:468.8px;top:450px;font-size:11px;line-height:12px;color:#222;">Nederland</div>
<div class="t" style="left:591.8px;top:450px;font-size:11px;line-height:12px;color:#15902A;font-weight:bold;">17.6</div>
<svg class="r" style="left:681px;top:451px" width="9" height="12" viewBox="0 0 9 12"><path d="M4.5 3 V11.6" stroke="#00F000" stroke-width="1.1"/><path d="M0.9 4.3 L4.5 0.1 L8.1 4.3 Z" fill="#00F000"/></svg>
<div class="t" style="left:714.8px;top:450px;font-size:11px;line-height:12px;color:#222;">60</div>
<div class="t" style="left:827.5px;top:450px;font-size:11px;line-height:12px;color:#222;">235</div>
<div class="t" style="left:901.2px;top:450px;font-size:11px;line-height:12px;color:#222;">236.5</div>
<div class="t" style="left:952.2px;top:450px;font-size:11px;line-height:12px;color:#222;">(231.5 <span style="color:#FF2020">+ 5</span>)</div>
<div class="r" style="left:3px;top:467px;width:30.0px;height:15px;background:#FFFFFF;"></div>
<div class="r" style="left:35px;top:467px;width:49.0px;height:15px;background:#FFFFFF;"></div>
<div class="r" style="left:86px;top:467px;width:148.5px;height:15px;background:#FFFFFF;"></div>
<div class="r" style="left:237.5px;top:467px;width:227.5px;height:15px;background:#FFFFFF;"></div>
<div class="r" style="left:468px;top:467px;width:120.0px;height:15px;background:#FFFFFF;"></div>
<div class="r" style="left:590.8px;top:467px;width:88.5px;height:15px;background:#FFFFFF;"></div>
<div class="r" style="left:681.2px;top:467px;width:29.5px;height:15px;background:#FFFFFF;"></div>
<div class="r" style="left:713.7px;top:467px;width:79.5px;height:15px;background:#FFFFFF;"></div>
<div class="r" style="left:795.2px;top:467px;width:28.5px;height:15px;background:#FFFFFF;"></div>
<div class="r" style="left:826.6px;top:467px;width:39.5px;height:15px;background:#FFFFFF;"></div>
<div class="r" style="left:868.3px;top:467px;width:29.5px;height:15px;background:#FFFFFF;"></div>
<div class="r" style="left:900.5px;top:467px;width:48.5px;height:15px;background:#FFFFFF;"></div>
<div class="r" style="left:951.3px;top:467px;width:69.5px;height:15px;background:#FFFFFF;"></div>
<div class="t" style="left:4px;top:468px;font-size:11px;line-height:12px;color:#222;">16</div>
<svg class="r" style="left:35px;top:468px" width="9" height="12" viewBox="0 0 9 12"><path d="M4.5 3 V11.6" stroke="#00F000" stroke-width="1.1"/><path d="M0.9 4.3 L4.5 0.1 L8.1 4.3 Z" fill="#00F000"/></svg>
<div class="t" style="left:45.8px;top:469px;font-size:11px;line-height:12px;color:#222;">(+33)</div>
<div class="t" style="left:87.2px;top:468px;font-size:11px;line-height:12px;color:#222;">42</div>
<svg class="r" style="left:238px;top:470px" width="11" height="11" viewBox="0 0 11 11" shape-rendering="crispEdges"><rect x="0" y="0" width="11" height="11" fill="#4A4AFF"/><rect x="1" y="1" width="9" height="9" fill="#0000FA"/><rect x="1" y="1" width="9" height="2" fill="#fff"/><rect x="1" y="2" width="1" height="1" fill="#E8E8FF"/><rect x="9" y="2" width="1" height="1" fill="#E8E8FF"/><rect x="4" y="3" width="3" height="5" fill="#fff"/><rect x="1" y="8" width="9" height="2" fill="#fff"/><rect x="1" y="9" width="9" height="1" fill="#E0E0FF"/></svg>
<div class="t" style="left:258px;top:468px;font-size:11px;line-height:12px;color:#222;">Theo (Utrecht)</div>
<div class="t" style="left:468.8px;top:468px;font-size:11px;line-height:12px;color:#222;">Nederland</div>
<div class="t" style="left:591.8px;top:468px;font-size:11px;line-height:12px;color:#222;">17.7</div>
<svg class="r" style="left:681px;top:469px" width="9" height="12" viewBox="0 0 9 12"><path d="M4.5 3 V11.6" stroke="#00F000" stroke-width="1.1"/><path d="M0.9 4.3 L4.5 0.1 L8.1 4.3 Z" fill="#00F000"/></svg>
<div class="t" style="left:714.8px;top:468px;font-size:11px;line-height:12px;color:#222;">58</div>
<div class="t" style="left:827.5px;top:468px;font-size:11px;line-height:12px;color:#222;">224</div>
<div class="t" style="left:901.2px;top:468px;font-size:11px;line-height:12px;color:#222;">236.3</div>
<div class="r" style="left:3px;top:483px;width:30.0px;height:20px;background:#FFFFFF;"></div>
<div class="r" style="left:35px;top:483px;width:49.0px;height:20px;background:#FFFFFF;"></div>
<div class="r" style="left:86px;top:483px;width:148.5px;height:20px;background:#FFFFFF;"></div>
<div class="r" style="left:237.5px;top:483px;width:227.5px;height:20px;background:#FFFFFF;"></div>
<div class="r" style="left:468px;top:483px;width:120.0px;height:20px;background:#FFFFFF;"></div>
<div class="r" style="left:590.8px;top:483px;width:88.5px;height:20px;background:#FFFFFF;"></div>
<div class="r" style="left:681.2px;top:483px;width:29.5px;height:20px;background:#FFFFFF;"></div>
<div class="r" style="left:713.7px;top:483px;width:79.5px;height:20px;background:#FFFFFF;"></div>
<div class="r" style="left:795.2px;top:483px;width:28.5px;height:20px;background:#FFFFFF;"></div>
<div class="r" style="left:826.6px;top:483px;width:39.5px;height:20px;background:#FFFFFF;"></div>
<div class="r" style="left:868.3px;top:483px;width:29.5px;height:20px;background:#FFFFFF;"></div>
<div class="r" style="left:900.5px;top:483px;width:48.5px;height:20px;background:#FFFFFF;"></div>
<div class="r" style="left:951.3px;top:483px;width:69.5px;height:20px;background:#FFFFFF;"></div>
<div class="t" style="left:4px;top:487px;font-size:11px;line-height:12px;color:#222;">17</div>
<svg class="r" style="left:35px;top:487px" width="9" height="12" viewBox="0 0 9 12"><path d="M4.5 0.4 V8" stroke="#FF0000" stroke-width="1.1"/><path d="M0.9 6.8 L4.5 11 L8.1 6.8 Z" fill="#FF0000"/></svg>
<div class="t" style="left:45.8px;top:488px;font-size:11px;line-height:12px;color:#222;">(-6)</div>
<div class="t" style="left:87.2px;top:490px;font-size:11px;line-height:12px;color:#222;">13</div>
<svg class="r" style="left:109px;top:485px" width="9" height="16" viewBox="0 0 9 16"><rect x="0" y="0" width="9" height="1.3" fill="#222"/><path d="M0.8 1 H2 L2.6 4.2 H1.6 Z M7 1 H8.2 L7.4 4.2 H6.4 Z" fill="#111"/><rect x="2.6" y="1.2" width="3.8" height="4.6" fill="#F8D400"/><rect x="3" y="5.4" width="3" height="1.4" fill="#111"/><path d="M2.4 6.6 H6.6 L9 9.2 V13.4 L6.6 16 H2.4 L0 13.4 V9.2 Z" fill="#151515"/><path d="M2.9 7.6 H6.1 L8 9.6 V13 L6.1 15 H2.9 L1 13 V9.6 Z" fill="#C88E4C"/><path d="M3.2 9.6 C4 8.9 6.2 9.1 6 10.6 C5.9 11.3 5.2 11.6 4.8 11.7 C5.6 11.8 6.2 12.4 6 13.3 C5.7 14.6 3.6 14.6 3 13.8 L3.5 13.2 C4 13.8 5.1 13.7 5.1 12.9 C5.1 12.2 4.4 12.1 4 12.1 V11.3 C4.5 11.3 5.1 11.1 5.1 10.5 C5.1 9.8 4 9.8 3.6 10.3 Z" fill="#1a1a1a"/></svg>
<svg class="r" style="left:238px;top:489px" width="11" height="11" viewBox="0 0 11 11" shape-rendering="crispEdges"><rect x="0" y="0" width="11" height="11" fill="#4A4AFF"/><rect x="1" y="1" width="9" height="9" fill="#0000FA"/><rect x="1" y="1" width="9" height="2" fill="#fff"/><rect x="1" y="2" width="1" height="1" fill="#E8E8FF"/><rect x="9" y="2" width="1" height="1" fill="#E8E8FF"/><rect x="4" y="3" width="3" height="5" fill="#fff"/><rect x="1" y="8" width="9" height="2" fill="#fff"/><rect x="1" y="9" width="9" height="1" fill="#E0E0FF"/></svg>
<div class="t" style="left:258px;top:487px;font-size:11px;line-height:12px;color:#222;">Ton (Papendrecht)</div>
<div class="t" style="left:468.8px;top:487px;font-size:11px;line-height:12px;color:#222;">Nederland</div>
<div class="t" style="left:591.8px;top:487px;font-size:11px;line-height:12px;color:#222;">16.8</div>
<svg class="r" style="left:681px;top:488px" width="9" height="12" viewBox="0 0 9 12"><path d="M4.5 0.4 V8" stroke="#FF0000" stroke-width="1.1"/><path d="M0.9 6.8 L4.5 11 L8.1 6.8 Z" fill="#FF0000"/></svg>
<div class="t" style="left:714.8px;top:487px;font-size:11px;line-height:12px;color:#222;">44</div>
<div class="t" style="left:827.5px;top:487px;font-size:11px;line-height:12px;color:#222;">206</div>
<div class="t" style="left:901.2px;top:487px;font-size:11px;line-height:12px;color:#222;">235.4</div>
<div class="r" style="left:3px;top:506px;width:30.0px;height:15px;background:#FFFFFF;"></div>
<div class="r" style="left:35px;top:506px;width:49.0px;height:15px;background:#FFFFFF;"></div>
<div class="r" style="left:86px;top:506px;width:148.5px;height:15px;background:#FFFFFF;"></div>
<div class="r" style="left:237.5px;top:506px;width:227.5px;height:15px;background:#FFFFFF;"></div>
<div class="r" style="left:468px;top:506px;width:120.0px;height:15px;background:#FFFFFF;"></div>
<div class="r" style="left:590.8px;top:506px;width:88.5px;height:15px;background:#FFFFFF;"></div>
<div class="r" style="left:681.2px;top:506px;width:29.5px;height:15px;background:#FFFFFF;"></div>
<div class="r" style="left:713.7px;top:506px;width:79.5px;height:15px;background:#FFFFFF;"></div>
<div class="r" style="left:795.2px;top:506px;width:28.5px;height:15px;background:#FFFFFF;"></div>
<div class="r" style="left:826.6px;top:506px;width:39.5px;height:15px;background:#FFFFFF;"></div>
<div class="r" style="left:868.3px;top:506px;width:29.5px;height:15px;background:#FFFFFF;"></div>
<div class="r" style="left:900.5px;top:506px;width:48.5px;height:15px;background:#FFFFFF;"></div>
<div class="r" style="left:951.3px;top:506px;width:69.5px;height:15px;background:#FFFFFF;"></div>
<div class="t" style="left:4px;top:507px;font-size:11px;line-height:12px;color:#222;">18</div>
<svg class="r" style="left:35px;top:507px" width="9" height="12" viewBox="0 0 9 12"><path d="M4.5 3 V11.6" stroke="#00F000" stroke-width="1.1"/><path d="M0.9 4.3 L4.5 0.1 L8.1 4.3 Z" fill="#00F000"/></svg>
<div class="t" style="left:45.8px;top:508px;font-size:11px;line-height:12px;color:#222;">(+12)</div>
<div class="t" style="left:87.2px;top:507px;font-size:11px;line-height:12px;color:#222;">6</div>
<svg class="r" style="left:238px;top:508px" width="11" height="11" viewBox="0 0 11 11" shape-rendering="crispEdges"><rect x="0" y="0" width="11" height="11" fill="#4A4AFF"/><rect x="1" y="1" width="9" height="9" fill="#0000FA"/><rect x="1" y="1" width="9" height="2" fill="#fff"/><rect x="1" y="2" width="1" height="1" fill="#E8E8FF"/><rect x="9" y="2" width="1" height="1" fill="#E8E8FF"/><rect x="4" y="3" width="3" height="5" fill="#fff"/><rect x="1" y="8" width="9" height="2" fill="#fff"/><rect x="1" y="9" width="9" height="1" fill="#E0E0FF"/></svg>
<div class="t" style="left:258px;top:507px;font-size:11px;line-height:12px;color:#222;">Erik (Nieuwegein)</div>
<div class="t" style="left:468.8px;top:507px;font-size:11px;line-height:12px;color:#222;">Nederland</div>
<div class="t" style="left:591.8px;top:507px;font-size:11px;line-height:12px;color:#222;">17.5</div>
<svg class="r" style="left:681px;top:508px" width="9" height="12" viewBox="0 0 9 12"><path d="M4.5 3 V11.6" stroke="#00F000" stroke-width="1.1"/><path d="M0.9 4.3 L4.5 0.1 L8.1 4.3 Z" fill="#00F000"/></svg>
<div class="t" style="left:714.8px;top:507px;font-size:11px;line-height:12px;color:#222;">53</div>
<div class="t" style="left:827.5px;top:507px;font-size:11px;line-height:12px;color:#222;">234</div>
<div class="t" style="left:901.2px;top:507px;font-size:11px;line-height:12px;color:#222;">235</div>
<div class="r" style="left:3px;top:523px;width:30.0px;height:15px;background:#FFFFFF;"></div>
<div class="r" style="left:35px;top:523px;width:49.0px;height:15px;background:#FFFFFF;"></div>
<div class="r" style="left:86px;top:523px;width:148.5px;height:15px;background:#FFFFFF;"></div>
<div class="r" style="left:237.5px;top:523px;width:227.5px;height:15px;background:#FFFFFF;"></div>
<div class="r" style="left:468px;top:523px;width:120.0px;height:15px;background:#FFFFFF;"></div>
<div class="r" style="left:590.8px;top:523px;width:88.5px;height:15px;background:#FFFFFF;"></div>
<div class="r" style="left:681.2px;top:523px;width:29.5px;height:15px;background:#FFFFFF;"></div>
<div class="r" style="left:713.7px;top:523px;width:79.5px;height:15px;background:#FFFFFF;"></div>
<div class="r" style="left:795.2px;top:523px;width:28.5px;height:15px;background:#FFFFFF;"></div>
<div class="r" style="left:826.6px;top:523px;width:39.5px;height:15px;background:#FFFFFF;"></div>
<div class="r" style="left:868.3px;top:523px;width:29.5px;height:15px;background:#FFFFFF;"></div>
<div class="r" style="left:900.5px;top:523px;width:48.5px;height:15px;background:#FFFFFF;"></div>
<div class="r" style="left:951.3px;top:523px;width:69.5px;height:15px;background:#FFFFFF;"></div>
<div class="t" style="left:4px;top:525px;font-size:11px;line-height:12px;color:#222;">19</div>
<svg class="r" style="left:35px;top:524px" width="9" height="12" viewBox="0 0 9 12"><path d="M4.5 0.4 V8" stroke="#FF0000" stroke-width="1.1"/><path d="M0.9 6.8 L4.5 11 L8.1 6.8 Z" fill="#FF0000"/></svg>
<div class="t" style="left:45.8px;top:525px;font-size:11px;line-height:12px;color:#222;">(-7)</div>
<div class="t" style="left:87.2px;top:525px;font-size:11px;line-height:12px;color:#222;">23</div>
<svg class="r" style="left:238px;top:526px" width="11" height="11" viewBox="0 0 11 11" shape-rendering="crispEdges"><rect x="0" y="0" width="11" height="11" fill="#4A4AFF"/><rect x="1" y="1" width="9" height="9" fill="#0000FA"/><rect x="1" y="1" width="9" height="2" fill="#fff"/><rect x="1" y="2" width="1" height="1" fill="#E8E8FF"/><rect x="9" y="2" width="1" height="1" fill="#E8E8FF"/><rect x="4" y="3" width="3" height="5" fill="#fff"/><rect x="1" y="8" width="9" height="2" fill="#fff"/><rect x="1" y="9" width="9" height="1" fill="#E0E0FF"/></svg>
<div class="t" style="left:258px;top:525px;font-size:11px;line-height:12px;color:#222;">Marco (Hoogkarspel NH)</div>
<div class="t" style="left:468.8px;top:525px;font-size:11px;line-height:12px;color:#222;">Nederland</div>
<div class="t" style="left:591.8px;top:525px;font-size:11px;line-height:12px;color:#222;">17.0</div>
<svg class="r" style="left:681px;top:525px" width="9" height="12" viewBox="0 0 9 12"><path d="M4.5 0.4 V8" stroke="#FF0000" stroke-width="1.1"/><path d="M0.9 6.8 L4.5 11 L8.1 6.8 Z" fill="#FF0000"/></svg>
<div class="t" style="left:714.8px;top:525px;font-size:11px;line-height:12px;color:#222;">49</div>
<div class="t" style="left:827.5px;top:525px;font-size:11px;line-height:12px;color:#222;">211</div>
<div class="t" style="left:901.2px;top:525px;font-size:11px;line-height:12px;color:#222;">234.8</div>
<div class="r" style="left:3px;top:541px;width:30.0px;height:15px;background:#FFFFFF;"></div>
<div class="r" style="left:35px;top:541px;width:49.0px;height:15px;background:#FFFFFF;"></div>
<div class="r" style="left:86px;top:541px;width:148.5px;height:15px;background:#FFFFFF;"></div>
<div class="r" style="left:237.5px;top:541px;width:227.5px;height:15px;background:#FFFFFF;"></div>
<div class="r" style="left:468px;top:541px;width:120.0px;height:15px;background:#FFFFFF;"></div>
<div class="r" style="left:590.8px;top:541px;width:88.5px;height:15px;background:#FFFFFF;"></div>
<div class="r" style="left:681.2px;top:541px;width:29.5px;height:15px;background:#FFFFFF;"></div>
<div class="r" style="left:713.7px;top:541px;width:79.5px;height:15px;background:#FFFFFF;"></div>
<div class="r" style="left:795.2px;top:541px;width:28.5px;height:15px;background:#FFFFFF;"></div>
<div class="r" style="left:826.6px;top:541px;width:39.5px;height:15px;background:#FFFFFF;"></div>
<div class="r" style="left:868.3px;top:541px;width:29.5px;height:15px;background:#FFFFFF;"></div>
<div class="r" style="left:900.5px;top:541px;width:48.5px;height:15px;background:#FFFFFF;"></div>
<div class="r" style="left:951.3px;top:541px;width:69.5px;height:15px;background:#FFFFFF;"></div>
<div class="t" style="left:4px;top:542px;font-size:11px;line-height:12px;color:#222;">20</div>
<svg class="r" style="left:35px;top:542px" width="9" height="12" viewBox="0 0 9 12"><path d="M4.5 0.4 V8" stroke="#FF0000" stroke-width="1.1"/><path d="M0.9 6.8 L4.5 11 L8.1 6.8 Z" fill="#FF0000"/></svg>
<div class="t" style="left:45.8px;top:543px;font-size:11px;line-height:12px;color:#222;">(-7)</div>
<div class="t" style="left:87.2px;top:542px;font-size:11px;line-height:12px;color:#222;">126</div>
<svg class="r" style="left:238px;top:544px" width="11" height="11" viewBox="0 0 11 11" shape-rendering="crispEdges"><rect x="0" y="0" width="11" height="11" fill="#4A4AFF"/><rect x="1" y="1" width="9" height="9" fill="#0000FA"/><rect x="1" y="1" width="9" height="2" fill="#fff"/><rect x="1" y="2" width="1" height="1" fill="#E8E8FF"/><rect x="9" y="2" width="1" height="1" fill="#E8E8FF"/><rect x="4" y="3" width="3" height="5" fill="#fff"/><rect x="1" y="8" width="9" height="2" fill="#fff"/><rect x="1" y="9" width="9" height="1" fill="#E0E0FF"/></svg>
<div class="t" style="left:258px;top:542px;font-size:11px;line-height:12px;color:#222;">Joachim (München)</div>
<div class="t" style="left:468.8px;top:542px;font-size:11px;line-height:12px;color:#222;">Anders</div>
<div class="t" style="left:591.8px;top:542px;font-size:11px;line-height:12px;color:#222;">17.0</div>
<svg class="r" style="left:681px;top:543px" width="9" height="12" viewBox="0 0 9 12"><path d="M4.5 0.4 V8" stroke="#FF0000" stroke-width="1.1"/><path d="M0.9 6.8 L4.5 11 L8.1 6.8 Z" fill="#FF0000"/></svg>
<div class="t" style="left:714.8px;top:542px;font-size:11px;line-height:12px;color:#222;">50</div>
<div class="t" style="left:827.5px;top:542px;font-size:11px;line-height:12px;color:#222;">210</div>
<div class="t" style="left:901.2px;top:542px;font-size:11px;line-height:12px;color:#222;">234.5</div>
<div class="r" style="left:3px;top:559px;width:30.0px;height:15px;background:#FFFFFF;"></div>
<div class="r" style="left:35px;top:559px;width:49.0px;height:15px;background:#FFFFFF;"></div>
<div class="r" style="left:86px;top:559px;width:148.5px;height:15px;background:#FFFFFF;"></div>
<div class="r" style="left:237.5px;top:559px;width:227.5px;height:15px;background:#FFFFFF;"></div>
<div class="r" style="left:468px;top:559px;width:120.0px;height:15px;background:#FFFFFF;"></div>
<div class="r" style="left:590.8px;top:559px;width:88.5px;height:15px;background:#FFFFFF;"></div>
<div class="r" style="left:681.2px;top:559px;width:29.5px;height:15px;background:#FFFFFF;"></div>
<div class="r" style="left:713.7px;top:559px;width:79.5px;height:15px;background:#FFFFFF;"></div>
<div class="r" style="left:795.2px;top:559px;width:28.5px;height:15px;background:#FFFFFF;"></div>
<div class="r" style="left:826.6px;top:559px;width:39.5px;height:15px;background:#FFFFFF;"></div>
<div class="r" style="left:868.3px;top:559px;width:29.5px;height:15px;background:#FFFFFF;"></div>
<div class="r" style="left:900.5px;top:559px;width:48.5px;height:15px;background:#FFFFFF;"></div>
<div class="r" style="left:951.3px;top:559px;width:69.5px;height:15px;background:#FFFFFF;"></div>
<div class="t" style="left:4px;top:560px;font-size:11px;line-height:12px;color:#222;">21</div>
<svg class="r" style="left:35px;top:560px" width="9" height="12" viewBox="0 0 9 12"><path d="M4.5 0.4 V8" stroke="#FF0000" stroke-width="1.1"/><path d="M0.9 6.8 L4.5 11 L8.1 6.8 Z" fill="#FF0000"/></svg>
<div class="t" style="left:45.8px;top:561px;font-size:11px;line-height:12px;color:#222;">(-7)</div>
<div class="t" style="left:87.2px;top:560px;font-size:11px;line-height:12px;color:#222;">999 / nieuw</div>
<svg class="r" style="left:238px;top:562px" width="11" height="11" viewBox="0 0 11 11" shape-rendering="crispEdges"><rect x="0" y="0" width="11" height="11" fill="#4A4AFF"/><rect x="1" y="1" width="9" height="9" fill="#0000FA"/><rect x="1" y="1" width="9" height="2" fill="#fff"/><rect x="1" y="2" width="1" height="1" fill="#E8E8FF"/><rect x="9" y="2" width="1" height="1" fill="#E8E8FF"/><rect x="4" y="3" width="3" height="5" fill="#fff"/><rect x="1" y="8" width="9" height="2" fill="#fff"/><rect x="1" y="9" width="9" height="1" fill="#E0E0FF"/></svg>
<div class="t" style="left:258px;top:560px;font-size:11px;line-height:12px;color:#222;">Joep (Well LB)</div>
<div class="t" style="left:468.8px;top:560px;font-size:11px;line-height:12px;color:#222;">Nederland</div>
<div class="t" style="left:591.8px;top:560px;font-size:11px;line-height:12px;color:#222;">16.8</div>
<svg class="r" style="left:681px;top:561px" width="9" height="12" viewBox="0 0 9 12"><path d="M4.5 0.4 V8" stroke="#FF0000" stroke-width="1.1"/><path d="M0.9 6.8 L4.5 11 L8.1 6.8 Z" fill="#FF0000"/></svg>
<div class="t" style="left:714.8px;top:560px;font-size:11px;line-height:12px;color:#222;">54</div>
<div class="t" style="left:827.5px;top:560px;font-size:11px;line-height:12px;color:#222;">194</div>
<div class="t" style="left:901.2px;top:560px;font-size:11px;line-height:12px;color:#222;">233.3</div>
<div class="r" style="left:3px;top:577px;width:30.0px;height:15px;background:#FFFFFF;"></div>
<div class="r" style="left:35px;top:577px;width:49.0px;height:15px;background:#FFFFFF;"></div>
<div class="r" style="left:86px;top:577px;width:148.5px;height:15px;background:#FFFFFF;"></div>
<div class="r" style="left:237.5px;top:577px;width:227.5px;height:15px;background:#FFFFFF;"></div>
<div class="r" style="left:468px;top:577px;width:120.0px;height:15px;background:#FFFFFF;"></div>
<div class="r" style="left:590.8px;top:577px;width:88.5px;height:15px;background:#FFFFFF;"></div>
<div class="r" style="left:681.2px;top:577px;width:29.5px;height:15px;background:#FFFFFF;"></div>
<div class="r" style="left:713.7px;top:577px;width:79.5px;height:15px;background:#FFFFFF;"></div>
<div class="r" style="left:795.2px;top:577px;width:28.5px;height:15px;background:#FFFFFF;"></div>
<div class="r" style="left:826.6px;top:577px;width:39.5px;height:15px;background:#FFFFFF;"></div>
<div class="r" style="left:868.3px;top:577px;width:29.5px;height:15px;background:#FFFFFF;"></div>
<div class="r" style="left:900.5px;top:577px;width:48.5px;height:15px;background:#FFFFFF;"></div>
<div class="r" style="left:951.3px;top:577px;width:69.5px;height:15px;background:#FFFFFF;"></div>
<div class="t" style="left:4px;top:578px;font-size:11px;line-height:12px;color:#222;">22</div>
<svg class="r" style="left:35px;top:578px" width="9" height="12" viewBox="0 0 9 12"><path d="M4.5 3 V11.6" stroke="#00F000" stroke-width="1.1"/><path d="M0.9 4.3 L4.5 0.1 L8.1 4.3 Z" fill="#00F000"/></svg>
<div class="t" style="left:45.8px;top:579px;font-size:11px;line-height:12px;color:#222;">(+48)</div>
<div class="t" style="left:87.2px;top:578px;font-size:11px;line-height:12px;color:#222;">116</div>
<svg class="r" style="left:238px;top:580px" width="11" height="11" viewBox="0 0 11 11" shape-rendering="crispEdges"><rect x="0" y="0" width="11" height="11" fill="#4A4AFF"/><rect x="1" y="1" width="9" height="9" fill="#0000FA"/><rect x="1" y="1" width="9" height="2" fill="#fff"/><rect x="1" y="2" width="1" height="1" fill="#E8E8FF"/><rect x="9" y="2" width="1" height="1" fill="#E8E8FF"/><rect x="4" y="3" width="3" height="5" fill="#fff"/><rect x="1" y="8" width="9" height="2" fill="#fff"/><rect x="1" y="9" width="9" height="1" fill="#E0E0FF"/></svg>
<div class="t" style="left:258px;top:578px;font-size:11px;line-height:12px;color:#222;">Saskia (Diepenveen)</div>
<div class="t" style="left:468.8px;top:578px;font-size:11px;line-height:12px;color:#222;">Nederland</div>
<div class="t" style="left:591.8px;top:578px;font-size:11px;line-height:12px;color:#15902A;font-weight:bold;">17.6</div>
<svg class="r" style="left:681px;top:579px" width="9" height="12" viewBox="0 0 9 12"><path d="M4.5 3 V11.6" stroke="#00F000" stroke-width="1.1"/><path d="M0.9 4.3 L4.5 0.1 L8.1 4.3 Z" fill="#00F000"/></svg>
<div class="t" style="left:714.8px;top:578px;font-size:11px;line-height:12px;color:#222;">101</div>
<div class="t" style="left:827.5px;top:578px;font-size:11px;line-height:12px;color:#222;">178</div>
<div class="t" style="left:901.2px;top:578px;font-size:11px;line-height:12px;color:#222;">232.5</div>
<div class="t" style="left:952.2px;top:578px;font-size:11px;line-height:12px;color:#222;">(227.5 <span style="color:#FF2020">+ 5</span>)</div>
<div class="r" style="left:3px;top:594px;width:30.0px;height:15px;background:#FFFFFF;"></div>
<div class="r" style="left:35px;top:594px;width:49.0px;height:15px;background:#FFFFFF;"></div>
<div class="r" style="left:86px;top:594px;width:148.5px;height:15px;background:#FFFFFF;"></div>
<div class="r" style="left:237.5px;top:594px;width:227.5px;height:15px;background:#FFFFFF;"></div>
<div class="r" style="left:468px;top:594px;width:120.0px;height:15px;background:#FFFFFF;"></div>
<div class="r" style="left:590.8px;top:594px;width:88.5px;height:15px;background:#FFFFFF;"></div>
<div class="r" style="left:681.2px;top:594px;width:29.5px;height:15px;background:#FFFFFF;"></div>
<div class="r" style="left:713.7px;top:594px;width:79.5px;height:15px;background:#FFFFFF;"></div>
<div class="r" style="left:795.2px;top:594px;width:28.5px;height:15px;background:#FFFFFF;"></div>
<div class="r" style="left:826.6px;top:594px;width:39.5px;height:15px;background:#FFFFFF;"></div>
<div class="r" style="left:868.3px;top:594px;width:29.5px;height:15px;background:#FFFFFF;"></div>
<div class="r" style="left:900.5px;top:594px;width:48.5px;height:15px;background:#FFFFFF;"></div>
<div class="r" style="left:951.3px;top:594px;width:69.5px;height:15px;background:#FFFFFF;"></div>
<div class="t" style="left:4px;top:595px;font-size:11px;line-height:12px;color:#222;">23</div>
<svg class="r" style="left:35px;top:595px" width="9" height="12" viewBox="0 0 9 12"><path d="M4.5 3 V11.6" stroke="#00F000" stroke-width="1.1"/><path d="M0.9 4.3 L4.5 0.1 L8.1 4.3 Z" fill="#00F000"/></svg>
<div class="t" style="left:45.8px;top:596px;font-size:11px;line-height:12px;color:#222;">(+48)</div>
<div class="t" style="left:87.2px;top:595px;font-size:11px;line-height:12px;color:#222;">139</div>
<svg class="r" style="left:238px;top:597px" width="11" height="11" viewBox="0 0 11 11" shape-rendering="crispEdges"><rect x="0" y="0" width="11" height="11" fill="#4A4AFF"/><rect x="1" y="1" width="9" height="9" fill="#0000FA"/><rect x="1" y="1" width="9" height="2" fill="#fff"/><rect x="1" y="2" width="1" height="1" fill="#E8E8FF"/><rect x="9" y="2" width="1" height="1" fill="#E8E8FF"/><rect x="4" y="3" width="3" height="5" fill="#fff"/><rect x="1" y="8" width="9" height="2" fill="#fff"/><rect x="1" y="9" width="9" height="1" fill="#E0E0FF"/></svg>
<div class="t" style="left:258px;top:595px;font-size:11px;line-height:12px;color:#222;">Robbert (&#x27;t Veld)</div>
<div class="t" style="left:468.8px;top:595px;font-size:11px;line-height:12px;color:#222;">Nederland</div>
<div class="t" style="left:591.8px;top:595px;font-size:11px;line-height:12px;color:#15902A;font-weight:bold;">17.6</div>
<svg class="r" style="left:681px;top:596px" width="9" height="12" viewBox="0 0 9 12"><path d="M4.5 3 V11.6" stroke="#00F000" stroke-width="1.1"/><path d="M0.9 4.3 L4.5 0.1 L8.1 4.3 Z" fill="#00F000"/></svg>
<div class="t" style="left:714.8px;top:595px;font-size:11px;line-height:12px;color:#222;">82</div>
<div class="t" style="left:827.5px;top:595px;font-size:11px;line-height:12px;color:#222;">208</div>
<div class="t" style="left:901.2px;top:595px;font-size:11px;line-height:12px;color:#222;">232.3</div>
<div class="t" style="left:952.2px;top:595px;font-size:11px;line-height:12px;color:#222;">(227.3 <span style="color:#FF2020">+ 5</span>)</div>
<div class="r" style="left:3px;top:612px;width:30.0px;height:15px;background:#FFFFFF;"></div>
<div class="r" style="left:35px;top:612px;width:49.0px;height:15px;background:#FFFFFF;"></div>
<div class="r" style="left:86px;top:612px;width:148.5px;height:15px;background:#FFFFFF;"></div>
<div class="r" style="left:237.5px;top:612px;width:227.5px;height:15px;background:#FFFFFF;"></div>
<div class="r" style="left:468px;top:612px;width:120.0px;height:15px;background:#FFFFFF;"></div>
<div class="r" style="left:590.8px;top:612px;width:88.5px;height:15px;background:#FFFFFF;"></div>
<div class="r" style="left:681.2px;top:612px;width:29.5px;height:15px;background:#FFFFFF;"></div>
<div class="r" style="left:713.7px;top:612px;width:79.5px;height:15px;background:#FFFFFF;"></div>
<div class="r" style="left:795.2px;top:612px;width:28.5px;height:15px;background:#FFFFFF;"></div>
<div class="r" style="left:826.6px;top:612px;width:39.5px;height:15px;background:#FFFFFF;"></div>
<div class="r" style="left:868.3px;top:612px;width:29.5px;height:15px;background:#FFFFFF;"></div>
<div class="r" style="left:900.5px;top:612px;width:48.5px;height:15px;background:#FFFFFF;"></div>
<div class="r" style="left:951.3px;top:612px;width:69.5px;height:15px;background:#FFFFFF;"></div>
<div class="t" style="left:4px;top:613px;font-size:11px;line-height:12px;color:#222;">24</div>
<svg class="r" style="left:35px;top:613px" width="9" height="12" viewBox="0 0 9 12"><path d="M4.5 0.4 V8" stroke="#FF0000" stroke-width="1.1"/><path d="M0.9 6.8 L4.5 11 L8.1 6.8 Z" fill="#FF0000"/></svg>
<div class="t" style="left:45.8px;top:614px;font-size:11px;line-height:12px;color:#222;">(-9)</div>
<div class="t" style="left:87.2px;top:613px;font-size:11px;line-height:12px;color:#222;">34</div>
<svg class="r" style="left:238px;top:615px" width="11" height="11" viewBox="0 0 11 11" shape-rendering="crispEdges"><rect x="0" y="0" width="11" height="11" fill="#4A4AFF"/><rect x="1" y="1" width="9" height="9" fill="#0000FA"/><rect x="1" y="1" width="9" height="2" fill="#fff"/><rect x="1" y="2" width="1" height="1" fill="#E8E8FF"/><rect x="9" y="2" width="1" height="1" fill="#E8E8FF"/><rect x="4" y="3" width="3" height="5" fill="#fff"/><rect x="1" y="8" width="9" height="2" fill="#fff"/><rect x="1" y="9" width="9" height="1" fill="#E0E0FF"/></svg>
<div class="t" style="left:258px;top:613px;font-size:11px;line-height:12px;color:#222;">Levi (Altenberg)</div>
<div class="t" style="left:468.8px;top:613px;font-size:11px;line-height:12px;color:#222;">Anders</div>
<div class="t" style="left:591.8px;top:613px;font-size:11px;line-height:12px;color:#222;">16.9</div>
<svg class="r" style="left:681px;top:614px" width="9" height="12" viewBox="0 0 9 12"><path d="M4.5 0.4 V8" stroke="#FF0000" stroke-width="1.1"/><path d="M0.9 6.8 L4.5 11 L8.1 6.8 Z" fill="#FF0000"/></svg>
<div class="t" style="left:714.8px;top:613px;font-size:11px;line-height:12px;color:#222;">58</div>
<div class="t" style="left:827.5px;top:613px;font-size:11px;line-height:12px;color:#222;">199</div>
<div class="t" style="left:901.2px;top:613px;font-size:11px;line-height:12px;color:#222;">230.2</div>
<div class="r" style="left:3px;top:629px;width:30.0px;height:15px;background:#FFFFFF;"></div>
<div class="r" style="left:35px;top:629px;width:49.0px;height:15px;background:#FFFFFF;"></div>
<div class="r" style="left:86px;top:629px;width:148.5px;height:15px;background:#FFFFFF;"></div>
<div class="r" style="left:237.5px;top:629px;width:227.5px;height:15px;background:#FFFFFF;"></div>
<div class="r" style="left:468px;top:629px;width:120.0px;height:15px;background:#FFFFFF;"></div>
<div class="r" style="left:590.8px;top:629px;width:88.5px;height:15px;background:#FFFFFF;"></div>
<div class="r" style="left:681.2px;top:629px;width:29.5px;height:15px;background:#FFFFFF;"></div>
<div class="r" style="left:713.7px;top:629px;width:79.5px;height:15px;background:#FFFFFF;"></div>
<div class="r" style="left:795.2px;top:629px;width:28.5px;height:15px;background:#FFFFFF;"></div>
<div class="r" style="left:826.6px;top:629px;width:39.5px;height:15px;background:#FFFFFF;"></div>
<div class="r" style="left:868.3px;top:629px;width:29.5px;height:15px;background:#FFFFFF;"></div>
<div class="r" style="left:900.5px;top:629px;width:48.5px;height:15px;background:#FFFFFF;"></div>
<div class="r" style="left:951.3px;top:629px;width:69.5px;height:15px;background:#FFFFFF;"></div>
<div class="t" style="left:4px;top:631px;font-size:11px;line-height:12px;color:#222;">25</div>
<svg class="r" style="left:35px;top:630px" width="9" height="12" viewBox="0 0 9 12"><path d="M4.5 3 V11.6" stroke="#00F000" stroke-width="1.1"/><path d="M0.9 4.3 L4.5 0.1 L8.1 4.3 Z" fill="#00F000"/></svg>
<div class="t" style="left:45.8px;top:631px;font-size:11px;line-height:12px;color:#222;">(+39)</div>
<div class="t" style="left:87.2px;top:631px;font-size:11px;line-height:12px;color:#222;">55</div>
<svg class="r" style="left:238px;top:632px" width="11" height="11" viewBox="0 0 11 11" shape-rendering="crispEdges"><rect x="0" y="0" width="11" height="11" fill="#4A4AFF"/><rect x="1" y="1" width="9" height="9" fill="#0000FA"/><rect x="1" y="1" width="9" height="2" fill="#fff"/><rect x="1" y="2" width="1" height="1" fill="#E8E8FF"/><rect x="9" y="2" width="1" height="1" fill="#E8E8FF"/><rect x="4" y="3" width="3" height="5" fill="#fff"/><rect x="1" y="8" width="9" height="2" fill="#fff"/><rect x="1" y="9" width="9" height="1" fill="#E0E0FF"/></svg>
<div class="t" style="left:258px;top:631px;font-size:11px;line-height:12px;color:#222;">Peter (Borculo)</div>
<div class="t" style="left:468.8px;top:631px;font-size:11px;line-height:12px;color:#222;">Nederland</div>
<div class="t" style="left:591.8px;top:631px;font-size:11px;line-height:12px;color:#222;">17.7</div>
<svg class="r" style="left:681px;top:631px" width="9" height="12" viewBox="0 0 9 12"><path d="M4.5 3 V11.6" stroke="#00F000" stroke-width="1.1"/><path d="M0.9 4.3 L4.5 0.1 L8.1 4.3 Z" fill="#00F000"/></svg>
<div class="t" style="left:714.8px;top:631px;font-size:11px;line-height:12px;color:#222;">41</div>
<div class="t" style="left:827.5px;top:631px;font-size:11px;line-height:12px;color:#222;">261</div>
<div class="t" style="left:901.2px;top:631px;font-size:11px;line-height:12px;color:#222;">230.1</div>
<div class="r" style="left:3px;top:645px;width:30.0px;height:20px;background:#FFFFFF;"></div>
<div class="r" style="left:35px;top:645px;width:49.0px;height:20px;background:#FFFFFF;"></div>
<div class="r" style="left:86px;top:645px;width:148.5px;height:20px;background:#FFFFFF;"></div>
<div class="r" style="left:237.5px;top:645px;width:227.5px;height:20px;background:#FFFFFF;"></div>
<div class="r" style="left:468px;top:645px;width:120.0px;height:20px;background:#FFFFFF;"></div>
<div class="r" style="left:590.8px;top:645px;width:88.5px;height:20px;background:#FFFFFF;"></div>
<div class="r" style="left:681.2px;top:645px;width:29.5px;height:20px;background:#FFFFFF;"></div>
<div class="r" style="left:713.7px;top:645px;width:79.5px;height:20px;background:#FFFFFF;"></div>
<div class="r" style="left:795.2px;top:645px;width:28.5px;height:20px;background:#FFFFFF;"></div>
<div class="r" style="left:826.6px;top:645px;width:39.5px;height:20px;background:#FFFFFF;"></div>
<div class="r" style="left:868.3px;top:645px;width:29.5px;height:20px;background:#FFFFFF;"></div>
<div class="r" style="left:900.5px;top:645px;width:48.5px;height:20px;background:#FFFFFF;"></div>
<div class="r" style="left:951.3px;top:645px;width:69.5px;height:20px;background:#FFFFFF;"></div>
<div class="t" style="left:4px;top:649px;font-size:11px;line-height:12px;color:#222;">26</div>
<svg class="r" style="left:35px;top:649px" width="9" height="12" viewBox="0 0 9 12"><path d="M4.5 3 V11.6" stroke="#00F000" stroke-width="1.1"/><path d="M0.9 4.3 L4.5 0.1 L8.1 4.3 Z" fill="#00F000"/></svg>
<div class="t" style="left:45.8px;top:650px;font-size:11px;line-height:12px;color:#222;">(+39)</div>
<div class="t" style="left:87.2px;top:652px;font-size:11px;line-height:12px;color:#222;">43</div>
<svg class="r" style="left:109px;top:647px" width="9" height="16" viewBox="0 0 9 16"><rect x="0" y="0" width="9" height="1.3" fill="#222"/><path d="M0.8 1 H2 L2.6 4.2 H1.6 Z M7 1 H8.2 L7.4 4.2 H6.4 Z" fill="#111"/><rect x="2.6" y="1.2" width="3.8" height="4.6" fill="#F8D400"/><rect x="3" y="5.4" width="3" height="1.4" fill="#111"/><path d="M2.4 6.6 H6.6 L9 9.2 V13.4 L6.6 16 H2.4 L0 13.4 V9.2 Z" fill="#151515"/><path d="M2.9 7.6 H6.1 L8 9.6 V13 L6.1 15 H2.9 L1 13 V9.6 Z" fill="#C88E4C"/><path d="M3.2 9.6 C4 8.9 6.2 9.1 6 10.6 C5.9 11.3 5.2 11.6 4.8 11.7 C5.6 11.8 6.2 12.4 6 13.3 C5.7 14.6 3.6 14.6 3 13.8 L3.5 13.2 C4 13.8 5.1 13.7 5.1 12.9 C5.1 12.2 4.4 12.1 4 12.1 V11.3 C4.5 11.3 5.1 11.1 5.1 10.5 C5.1 9.8 4 9.8 3.6 10.3 Z" fill="#1a1a1a"/></svg>
<svg class="r" style="left:238px;top:651px" width="11" height="11" viewBox="0 0 11 11" shape-rendering="crispEdges"><rect x="0" y="0" width="11" height="11" fill="#4A4AFF"/><rect x="1" y="1" width="9" height="9" fill="#0000FA"/><rect x="1" y="1" width="9" height="2" fill="#fff"/><rect x="1" y="2" width="1" height="1" fill="#E8E8FF"/><rect x="9" y="2" width="1" height="1" fill="#E8E8FF"/><rect x="4" y="3" width="3" height="5" fill="#fff"/><rect x="1" y="8" width="9" height="2" fill="#fff"/><rect x="1" y="9" width="9" height="1" fill="#E0E0FF"/></svg>
<div class="t" style="left:258px;top:649px;font-size:11px;line-height:12px;color:#222;">Jef (Houthalen Be)</div>
<div class="t" style="left:468.8px;top:649px;font-size:11px;line-height:12px;color:#222;">België</div>
<div class="t" style="left:591.8px;top:649px;font-size:11px;line-height:12px;color:#222;">18.0</div>
<svg class="r" style="left:681px;top:650px" width="9" height="12" viewBox="0 0 9 12"><path d="M4.5 3 V11.6" stroke="#00F000" stroke-width="1.1"/><path d="M0.9 4.3 L4.5 0.1 L8.1 4.3 Z" fill="#00F000"/></svg>
<div class="t" style="left:714.8px;top:649px;font-size:11px;line-height:12px;color:#222;">46</div>
<div class="t" style="left:827.5px;top:649px;font-size:11px;line-height:12px;color:#222;">236</div>
<div class="t" style="left:901.2px;top:649px;font-size:11px;line-height:12px;color:#222;">229.8</div>
<div class="r" style="left:3px;top:668px;width:30.0px;height:15px;background:#FFFFFF;"></div>
<div class="r" style="left:35px;top:668px;width:49.0px;height:15px;background:#FFFFFF;"></div>
<div class="r" style="left:86px;top:668px;width:148.5px;height:15px;background:#FFFFFF;"></div>
<div class="r" style="left:237.5px;top:668px;width:227.5px;height:15px;background:#FFFFFF;"></div>
<div class="r" style="left:468px;top:668px;width:120.0px;height:15px;background:#FFFFFF;"></div>
<div class="r" style="left:590.8px;top:668px;width:88.5px;height:15px;background:#FFFFFF;"></div>
<div class="r" style="left:681.2px;top:668px;width:29.5px;height:15px;background:#FFFFFF;"></div>
<div class="r" style="left:713.7px;top:668px;width:79.5px;height:15px;background:#FFFFFF;"></div>
<div class="r" style="left:795.2px;top:668px;width:28.5px;height:15px;background:#FFFFFF;"></div>
<div class="r" style="left:826.6px;top:668px;width:39.5px;height:15px;background:#FFFFFF;"></div>
<div class="r" style="left:868.3px;top:668px;width:29.5px;height:15px;background:#FFFFFF;"></div>
<div class="r" style="left:900.5px;top:668px;width:48.5px;height:15px;background:#FFFFFF;"></div>
<div class="r" style="left:951.3px;top:668px;width:69.5px;height:15px;background:#FFFFFF;"></div>
<div class="t" style="left:4px;top:670px;font-size:11px;line-height:12px;color:#FF0000;font-weight:bold;">27</div>
<svg class="r" style="left:35px;top:669px" width="9" height="12" viewBox="0 0 9 12"><path d="M4.5 0.4 V8" stroke="#FF0000" stroke-width="1.1"/><path d="M0.9 6.8 L4.5 11 L8.1 6.8 Z" fill="#FF0000"/></svg>
<div class="t" style="left:45.8px;top:670px;font-size:11px;line-height:12px;color:#FF0000;font-weight:bold;">(-10)</div>
<div class="t" style="left:87.2px;top:670px;font-size:11px;line-height:12px;color:#FF0000;font-weight:bold;">38</div>
<svg class="r" style="left:238px;top:671px" width="11" height="11" viewBox="0 0 11 11" shape-rendering="crispEdges"><rect x="0" y="0" width="11" height="11" fill="#4A4AFF"/><rect x="1" y="1" width="9" height="9" fill="#0000FA"/><rect x="1" y="1" width="9" height="2" fill="#fff"/><rect x="1" y="2" width="1" height="1" fill="#E8E8FF"/><rect x="9" y="2" width="1" height="1" fill="#E8E8FF"/><rect x="4" y="3" width="3" height="5" fill="#fff"/><rect x="1" y="8" width="9" height="2" fill="#fff"/><rect x="1" y="9" width="9" height="1" fill="#E0E0FF"/></svg>
<div class="t" style="left:258px;top:670px;font-size:11px;line-height:12px;color:#FF0000;font-weight:bold;">GEMIDDELD BE</div>
<div class="t" style="left:468.8px;top:670px;font-size:11px;line-height:12px;color:#FF0000;font-weight:bold;">België</div>
<div class="t" style="left:591.8px;top:670px;font-size:11px;line-height:12px;color:#FF0000;font-weight:bold;">17.2</div>
<svg class="r" style="left:681px;top:670px" width="9" height="12" viewBox="0 0 9 12"><path d="M4.5 0.4 V8" stroke="#FF0000" stroke-width="1.1"/><path d="M0.9 6.8 L4.5 11 L8.1 6.8 Z" fill="#FF0000"/></svg>
<div class="t" style="left:714.8px;top:670px;font-size:11px;line-height:12px;color:#FF0000;font-weight:bold;">62</div>
<div class="t" style="left:827.5px;top:670px;font-size:11px;line-height:12px;color:#FF0000;font-weight:bold;">213</div>
<div class="t" style="left:901.2px;top:670px;font-size:11px;line-height:12px;color:#FF0000;font-weight:bold;">228.7</div>
<div class="r" style="left:3px;top:686px;width:30.0px;height:15px;background:#FFFFFF;"></div>
<div class="r" style="left:35px;top:686px;width:49.0px;height:15px;background:#FFFFFF;"></div>
<div class="r" style="left:86px;top:686px;width:148.5px;height:15px;background:#FFFFFF;"></div>
<div class="r" style="left:237.5px;top:686px;width:227.5px;height:15px;background:#FFFFFF;"></div>
<div class="r" style="left:468px;top:686px;width:120.0px;height:15px;background:#FFFFFF;"></div>
<div class="r" style="left:590.8px;top:686px;width:88.5px;height:15px;background:#FFFFFF;"></div>
<div class="r" style="left:681.2px;top:686px;width:29.5px;height:15px;background:#FFFFFF;"></div>
<div class="r" style="left:713.7px;top:686px;width:79.5px;height:15px;background:#FFFFFF;"></div>
<div class="r" style="left:795.2px;top:686px;width:28.5px;height:15px;background:#FFFFFF;"></div>
<div class="r" style="left:826.6px;top:686px;width:39.5px;height:15px;background:#FFFFFF;"></div>
<div class="r" style="left:868.3px;top:686px;width:29.5px;height:15px;background:#FFFFFF;"></div>
<div class="r" style="left:900.5px;top:686px;width:48.5px;height:15px;background:#FFFFFF;"></div>
<div class="r" style="left:951.3px;top:686px;width:69.5px;height:15px;background:#FFFFFF;"></div>
<div class="t" style="left:4px;top:688px;font-size:11px;line-height:12px;color:#222;">28</div>
<svg class="r" style="left:35px;top:687px" width="9" height="12" viewBox="0 0 9 12"><path d="M4.5 3 V11.6" stroke="#00F000" stroke-width="1.1"/><path d="M0.9 4.3 L4.5 0.1 L8.1 4.3 Z" fill="#00F000"/></svg>
<div class="t" style="left:45.8px;top:688px;font-size:11px;line-height:12px;color:#222;">(+65)</div>
<div class="t" style="left:87.2px;top:688px;font-size:11px;line-height:12px;color:#222;">109</div>
<svg class="r" style="left:238px;top:689px" width="11" height="11" viewBox="0 0 11 11" shape-rendering="crispEdges"><rect x="0" y="0" width="11" height="11" fill="#4A4AFF"/><rect x="1" y="1" width="9" height="9" fill="#0000FA"/><rect x="1" y="1" width="9" height="2" fill="#fff"/><rect x="1" y="2" width="1" height="1" fill="#E8E8FF"/><rect x="9" y="2" width="1" height="1" fill="#E8E8FF"/><rect x="4" y="3" width="3" height="5" fill="#fff"/><rect x="1" y="8" width="9" height="2" fill="#fff"/><rect x="1" y="9" width="9" height="1" fill="#E0E0FF"/></svg>
<div class="t" style="left:258px;top:688px;font-size:11px;line-height:12px;color:#222;">Sjaak P (Hengelo)</div>
<div class="t" style="left:468.8px;top:688px;font-size:11px;line-height:12px;color:#222;">Nederland</div>
<div class="t" style="left:591.8px;top:688px;font-size:11px;line-height:12px;color:#15902A;font-weight:bold;">17.6</div>
<svg class="r" style="left:681px;top:688px" width="9" height="12" viewBox="0 0 9 12"><path d="M4.5 3 V11.6" stroke="#00F000" stroke-width="1.1"/><path d="M0.9 4.3 L4.5 0.1 L8.1 4.3 Z" fill="#00F000"/></svg>
<div class="t" style="left:714.8px;top:688px;font-size:11px;line-height:12px;color:#222;">104</div>
<div class="t" style="left:827.5px;top:688px;font-size:11px;line-height:12px;color:#222;">158</div>
<div class="t" style="left:901.2px;top:688px;font-size:11px;line-height:12px;color:#222;">228.6</div>
<div class="t" style="left:952.2px;top:688px;font-size:11px;line-height:12px;color:#222;">(223.6 <span style="color:#FF2020">+ 5</span>)</div>
<div class="r" style="left:3px;top:704px;width:30.0px;height:15px;background:#FFFFFF;"></div>
<div class="r" style="left:35px;top:704px;width:49.0px;height:15px;background:#FFFFFF;"></div>
<div class="r" style="left:86px;top:704px;width:148.5px;height:15px;background:#FFFFFF;"></div>
<div class="r" style="left:237.5px;top:704px;width:227.5px;height:15px;background:#FFFFFF;"></div>
<div class="r" style="left:468px;top:704px;width:120.0px;height:15px;background:#FFFFFF;"></div>
<div class="r" style="left:590.8px;top:704px;width:88.5px;height:15px;background:#FFFFFF;"></div>
<div class="r" style="left:681.2px;top:704px;width:29.5px;height:15px;background:#FFFFFF;"></div>
<div class="r" style="left:713.7px;top:704px;width:79.5px;height:15px;background:#FFFFFF;"></div>
<div class="r" style="left:795.2px;top:704px;width:28.5px;height:15px;background:#FFFFFF;"></div>
<div class="r" style="left:826.6px;top:704px;width:39.5px;height:15px;background:#FFFFFF;"></div>
<div class="r" style="left:868.3px;top:704px;width:29.5px;height:15px;background:#FFFFFF;"></div>
<div class="r" style="left:900.5px;top:704px;width:48.5px;height:15px;background:#FFFFFF;"></div>
<div class="r" style="left:951.3px;top:704px;width:69.5px;height:15px;background:#FFFFFF;"></div>
<div class="t" style="left:4px;top:706px;font-size:11px;line-height:12px;color:#222;">29</div>
<svg class="r" style="left:35px;top:705px" width="9" height="12" viewBox="0 0 9 12"><path d="M4.5 0.4 V8" stroke="#FF0000" stroke-width="1.1"/><path d="M0.9 6.8 L4.5 11 L8.1 6.8 Z" fill="#FF0000"/></svg>
<div class="t" style="left:45.8px;top:706px;font-size:11px;line-height:12px;color:#222;">(-11)</div>
<div class="t" style="left:87.2px;top:706px;font-size:11px;line-height:12px;color:#222;">132</div>
<svg class="r" style="left:238px;top:707px" width="11" height="11" viewBox="0 0 11 11" shape-rendering="crispEdges"><rect x="0" y="0" width="11" height="11" fill="#4A4AFF"/><rect x="1" y="1" width="9" height="9" fill="#0000FA"/><rect x="1" y="1" width="9" height="2" fill="#fff"/><rect x="1" y="2" width="1" height="1" fill="#E8E8FF"/><rect x="9" y="2" width="1" height="1" fill="#E8E8FF"/><rect x="4" y="3" width="3" height="5" fill="#fff"/><rect x="1" y="8" width="9" height="2" fill="#fff"/><rect x="1" y="9" width="9" height="1" fill="#E0E0FF"/></svg>
<div class="t" style="left:258px;top:706px;font-size:11px;line-height:12px;color:#222;">Marc (St-Truiden)</div>
<div class="t" style="left:468.8px;top:706px;font-size:11px;line-height:12px;color:#222;">België</div>
<div class="t" style="left:591.8px;top:706px;font-size:11px;line-height:12px;color:#222;">16.8</div>
<svg class="r" style="left:681px;top:706px" width="9" height="12" viewBox="0 0 9 12"><path d="M4.5 0.4 V8" stroke="#FF0000" stroke-width="1.1"/><path d="M0.9 6.8 L4.5 11 L8.1 6.8 Z" fill="#FF0000"/></svg>
<div class="t" style="left:714.8px;top:706px;font-size:11px;line-height:12px;color:#222;">44</div>
<div class="t" style="left:827.5px;top:706px;font-size:11px;line-height:12px;color:#222;">218</div>
<div class="t" style="left:901.2px;top:706px;font-size:11px;line-height:12px;color:#222;">228.4</div>
<div class="r" style="left:3px;top:721px;width:30.0px;height:15px;background:#FFFFFF;"></div>
<div class="r" style="left:35px;top:721px;width:49.0px;height:15px;background:#FFFFFF;"></div>
<div class="r" style="left:86px;top:721px;width:148.5px;height:15px;background:#FFFFFF;"></div>
<div class="r" style="left:237.5px;top:721px;width:227.5px;height:15px;background:#FFFFFF;"></div>
<div class="r" style="left:468px;top:721px;width:120.0px;height:15px;background:#FFFFFF;"></div>
<div class="r" style="left:590.8px;top:721px;width:88.5px;height:15px;background:#FFFFFF;"></div>
<div class="r" style="left:681.2px;top:721px;width:29.5px;height:15px;background:#FFFFFF;"></div>
<div class="r" style="left:713.7px;top:721px;width:79.5px;height:15px;background:#FFFFFF;"></div>
<div class="r" style="left:795.2px;top:721px;width:28.5px;height:15px;background:#FFFFFF;"></div>
<div class="r" style="left:826.6px;top:721px;width:39.5px;height:15px;background:#FFFFFF;"></div>
<div class="r" style="left:868.3px;top:721px;width:29.5px;height:15px;background:#FFFFFF;"></div>
<div class="r" style="left:900.5px;top:721px;width:48.5px;height:15px;background:#FFFFFF;"></div>
<div class="r" style="left:951.3px;top:721px;width:69.5px;height:15px;background:#FFFFFF;"></div>
<div class="t" style="left:4px;top:722px;font-size:11px;line-height:12px;color:#222;">30</div>
<svg class="r" style="left:35px;top:722px" width="9" height="12" viewBox="0 0 9 12"><path d="M4.5 3 V11.6" stroke="#00F000" stroke-width="1.1"/><path d="M0.9 4.3 L4.5 0.1 L8.1 4.3 Z" fill="#00F000"/></svg>
<div class="t" style="left:45.8px;top:723px;font-size:11px;line-height:12px;color:#222;">(+3)</div>
<div class="t" style="left:87.2px;top:722px;font-size:11px;line-height:12px;color:#222;">107</div>
<svg class="r" style="left:238px;top:724px" width="11" height="11" viewBox="0 0 11 11" shape-rendering="crispEdges"><rect x="0" y="0" width="11" height="11" fill="#4A4AFF"/><rect x="1" y="1" width="9" height="9" fill="#0000FA"/><rect x="1" y="1" width="9" height="2" fill="#fff"/><rect x="1" y="2" width="1" height="1" fill="#E8E8FF"/><rect x="9" y="2" width="1" height="1" fill="#E8E8FF"/><rect x="4" y="3" width="3" height="5" fill="#fff"/><rect x="1" y="8" width="9" height="2" fill="#fff"/><rect x="1" y="9" width="9" height="1" fill="#E0E0FF"/></svg>
<div class="t" style="left:258px;top:722px;font-size:11px;line-height:12px;color:#222;">Robbert (Vleuten)</div>
<div class="t" style="left:468.8px;top:722px;font-size:11px;line-height:12px;color:#222;">Nederland</div>
<div class="t" style="left:591.8px;top:722px;font-size:11px;line-height:12px;color:#222;">17.4</div>
<svg class="r" style="left:681px;top:723px" width="9" height="12" viewBox="0 0 9 12"><path d="M4.5 0.4 V8" stroke="#FF0000" stroke-width="1.1"/><path d="M0.9 6.8 L4.5 11 L8.1 6.8 Z" fill="#FF0000"/></svg>
<div class="t" style="left:714.8px;top:722px;font-size:11px;line-height:12px;color:#222;">80</div>
<div class="t" style="left:827.5px;top:722px;font-size:11px;line-height:12px;color:#222;">199</div>
<div class="t" style="left:901.2px;top:722px;font-size:11px;line-height:12px;color:#222;">227.5</div>
<div class="r" style="left:3px;top:739px;width:30.0px;height:15px;background:#FFFFFF;"></div>
<div class="r" style="left:35px;top:739px;width:49.0px;height:15px;background:#FFFFFF;"></div>
<div class="r" style="left:86px;top:739px;width:148.5px;height:15px;background:#FFFFFF;"></div>
<div class="r" style="left:237.5px;top:739px;width:227.5px;height:15px;background:#FFFFFF;"></div>
<div class="r" style="left:468px;top:739px;width:120.0px;height:15px;background:#FFFFFF;"></div>
<div class="r" style="left:590.8px;top:739px;width:88.5px;height:15px;background:#FFFFFF;"></div>
<div class="r" style="left:681.2px;top:739px;width:29.5px;height:15px;background:#FFFFFF;"></div>
<div class="r" style="left:713.7px;top:739px;width:79.5px;height:15px;background:#FFFFFF;"></div>
<div class="r" style="left:795.2px;top:739px;width:28.5px;height:15px;background:#FFFFFF;"></div>
<div class="r" style="left:826.6px;top:739px;width:39.5px;height:15px;background:#FFFFFF;"></div>
<div class="r" style="left:868.3px;top:739px;width:29.5px;height:15px;background:#FFFFFF;"></div>
<div class="r" style="left:900.5px;top:739px;width:48.5px;height:15px;background:#FFFFFF;"></div>
<div class="r" style="left:951.3px;top:739px;width:69.5px;height:15px;background:#FFFFFF;"></div>
<div class="t" style="left:4px;top:740px;font-size:11px;line-height:12px;color:#222;">31</div>
<svg class="r" style="left:35px;top:740px" width="9" height="12" viewBox="0 0 9 12"><path d="M4.5 0.4 V8" stroke="#FF0000" stroke-width="1.1"/><path d="M0.9 6.8 L4.5 11 L8.1 6.8 Z" fill="#FF0000"/></svg>
<div class="t" style="left:45.8px;top:741px;font-size:11px;line-height:12px;color:#222;">(-12)</div>
<div class="t" style="left:87.2px;top:740px;font-size:11px;line-height:12px;color:#222;">117</div>
<svg class="r" style="left:238px;top:742px" width="11" height="11" viewBox="0 0 11 11" shape-rendering="crispEdges"><rect x="0" y="0" width="11" height="11" fill="#4A4AFF"/><rect x="1" y="1" width="9" height="9" fill="#0000FA"/><rect x="1" y="1" width="9" height="2" fill="#fff"/><rect x="1" y="2" width="1" height="1" fill="#E8E8FF"/><rect x="9" y="2" width="1" height="1" fill="#E8E8FF"/><rect x="4" y="3" width="3" height="5" fill="#fff"/><rect x="1" y="8" width="9" height="2" fill="#fff"/><rect x="1" y="9" width="9" height="1" fill="#E0E0FF"/></svg>
<div class="t" style="left:258px;top:740px;font-size:11px;line-height:12px;color:#222;">Simon (Heist op den Berg)</div>
<div class="t" style="left:468.8px;top:740px;font-size:11px;line-height:12px;color:#222;">België</div>
<div class="t" style="left:591.8px;top:740px;font-size:11px;line-height:12px;color:#222;">17.1</div>
<svg class="r" style="left:681px;top:741px" width="9" height="12" viewBox="0 0 9 12"><path d="M4.5 0.4 V8" stroke="#FF0000" stroke-width="1.1"/><path d="M0.9 6.8 L4.5 11 L8.1 6.8 Z" fill="#FF0000"/></svg>
<div class="t" style="left:714.8px;top:740px;font-size:11px;line-height:12px;color:#222;">70</div>
<div class="t" style="left:827.5px;top:740px;font-size:11px;line-height:12px;color:#222;">197</div>
<div class="t" style="left:901.2px;top:740px;font-size:11px;line-height:12px;color:#222;">227.4</div>
<div class="r" style="left:3px;top:757px;width:30.0px;height:15px;background:#FFFFFF;"></div>
<div class="r" style="left:35px;top:757px;width:49.0px;height:15px;background:#FFFFFF;"></div>
<div class="r" style="left:86px;top:757px;width:148.5px;height:15px;background:#FFFFFF;"></div>
<div class="r" style="left:237.5px;top:757px;width:227.5px;height:15px;background:#FFFFFF;"></div>
<div class="r" style="left:468px;top:757px;width:120.0px;height:15px;background:#FFFFFF;"></div>
<div class="r" style="left:590.8px;top:757px;width:88.5px;height:15px;background:#FFFFFF;"></div>
<div class="r" style="left:681.2px;top:757px;width:29.5px;height:15px;background:#FFFFFF;"></div>
<div class="r" style="left:713.7px;top:757px;width:79.5px;height:15px;background:#FFFFFF;"></div>
<div class="r" style="left:795.2px;top:757px;width:28.5px;height:15px;background:#FFFFFF;"></div>
<div class="r" style="left:826.6px;top:757px;width:39.5px;height:15px;background:#FFFFFF;"></div>
<div class="r" style="left:868.3px;top:757px;width:29.5px;height:15px;background:#FFFFFF;"></div>
<div class="r" style="left:900.5px;top:757px;width:48.5px;height:15px;background:#FFFFFF;"></div>
<div class="r" style="left:951.3px;top:757px;width:69.5px;height:15px;background:#FFFFFF;"></div>
<div class="t" style="left:4px;top:758px;font-size:11px;line-height:12px;color:#222;">32</div>
<svg class="r" style="left:35px;top:758px" width="9" height="12" viewBox="0 0 9 12"><path d="M4.5 0.4 V8" stroke="#FF0000" stroke-width="1.1"/><path d="M0.9 6.8 L4.5 11 L8.1 6.8 Z" fill="#FF0000"/></svg>
<div class="t" style="left:45.8px;top:759px;font-size:11px;line-height:12px;color:#222;">(-12)</div>
<div class="t" style="left:87.2px;top:758px;font-size:11px;line-height:12px;color:#222;">57</div>
<svg class="r" style="left:238px;top:760px" width="11" height="11" viewBox="0 0 11 11" shape-rendering="crispEdges"><rect x="0" y="0" width="11" height="11" fill="#4A4AFF"/><rect x="1" y="1" width="9" height="9" fill="#0000FA"/><rect x="1" y="1" width="9" height="2" fill="#fff"/><rect x="1" y="2" width="1" height="1" fill="#E8E8FF"/><rect x="9" y="2" width="1" height="1" fill="#E8E8FF"/><rect x="4" y="3" width="3" height="5" fill="#fff"/><rect x="1" y="8" width="9" height="2" fill="#fff"/><rect x="1" y="9" width="9" height="1" fill="#E0E0FF"/></svg>
<div class="t" style="left:258px;top:758px;font-size:11px;line-height:12px;color:#222;">Milko Bouman (Dieren)</div>
<div class="t" style="left:468.8px;top:758px;font-size:11px;line-height:12px;color:#222;">Nederland</div>
<div class="t" style="left:591.8px;top:758px;font-size:11px;line-height:12px;color:#222;">16.9</div>
<svg class="r" style="left:681px;top:759px" width="9" height="12" viewBox="0 0 9 12"><path d="M4.5 0.4 V8" stroke="#FF0000" stroke-width="1.1"/><path d="M0.9 6.8 L4.5 11 L8.1 6.8 Z" fill="#FF0000"/></svg>
<div class="t" style="left:714.8px;top:758px;font-size:11px;line-height:12px;color:#222;">55</div>
<div class="t" style="left:827.5px;top:758px;font-size:11px;line-height:12px;color:#222;">210</div>
<div class="t" style="left:901.2px;top:758px;font-size:11px;line-height:12px;color:#222;">226.5</div>
<div class="r" style="left:3px;top:774px;width:30.0px;height:15px;background:#FFFFFF;"></div>
<div class="r" style="left:35px;top:774px;width:49.0px;height:15px;background:#FFFFFF;"></div>
<div class="r" style="left:86px;top:774px;width:148.5px;height:15px;background:#FFFFFF;"></div>
<div class="r" style="left:237.5px;top:774px;width:227.5px;height:15px;background:#FFFFFF;"></div>
<div class="r" style="left:468px;top:774px;width:120.0px;height:15px;background:#FFFFFF;"></div>
<div class="r" style="left:590.8px;top:774px;width:88.5px;height:15px;background:#FFFFFF;"></div>
<div class="r" style="left:681.2px;top:774px;width:29.5px;height:15px;background:#FFFFFF;"></div>
<div class="r" style="left:713.7px;top:774px;width:79.5px;height:15px;background:#FFFFFF;"></div>
<div class="r" style="left:795.2px;top:774px;width:28.5px;height:15px;background:#FFFFFF;"></div>
<div class="r" style="left:826.6px;top:774px;width:39.5px;height:15px;background:#FFFFFF;"></div>
<div class="r" style="left:868.3px;top:774px;width:29.5px;height:15px;background:#FFFFFF;"></div>
<div class="r" style="left:900.5px;top:774px;width:48.5px;height:15px;background:#FFFFFF;"></div>
<div class="r" style="left:951.3px;top:774px;width:69.5px;height:15px;background:#FFFFFF;"></div>
<div class="t" style="left:4px;top:775px;font-size:11px;line-height:12px;color:#222;">33</div>
<svg class="r" style="left:35px;top:775px" width="9" height="12" viewBox="0 0 9 12"><path d="M4.5 0.4 V8" stroke="#FF0000" stroke-width="1.1"/><path d="M0.9 6.8 L4.5 11 L8.1 6.8 Z" fill="#FF0000"/></svg>
<div class="t" style="left:45.8px;top:776px;font-size:11px;line-height:12px;color:#222;">(-12)</div>
<div class="t" style="left:87.2px;top:775px;font-size:11px;line-height:12px;color:#222;">22</div>
<svg class="r" style="left:238px;top:777px" width="11" height="11" viewBox="0 0 11 11" shape-rendering="crispEdges"><rect x="0" y="0" width="11" height="11" fill="#4A4AFF"/><rect x="1" y="1" width="9" height="9" fill="#0000FA"/><rect x="1" y="1" width="9" height="2" fill="#fff"/><rect x="1" y="2" width="1" height="1" fill="#E8E8FF"/><rect x="9" y="2" width="1" height="1" fill="#E8E8FF"/><rect x="4" y="3" width="3" height="5" fill="#fff"/><rect x="1" y="8" width="9" height="2" fill="#fff"/><rect x="1" y="9" width="9" height="1" fill="#E0E0FF"/></svg>
<div class="t" style="left:258px;top:775px;font-size:11px;line-height:12px;color:#222;">Andre (Noordwijkerhout)</div>
<div class="t" style="left:468.8px;top:775px;font-size:11px;line-height:12px;color:#222;">Nederland</div>
<div class="t" style="left:591.8px;top:775px;font-size:11px;line-height:12px;color:#222;">16.8</div>
<svg class="r" style="left:681px;top:776px" width="9" height="12" viewBox="0 0 9 12"><path d="M4.5 0.4 V8" stroke="#FF0000" stroke-width="1.1"/><path d="M0.9 6.8 L4.5 11 L8.1 6.8 Z" fill="#FF0000"/></svg>
<div class="t" style="left:714.8px;top:775px;font-size:11px;line-height:12px;color:#222;">52</div>
<div class="t" style="left:827.5px;top:775px;font-size:11px;line-height:12px;color:#222;">210</div>
<div class="t" style="left:901.2px;top:775px;font-size:11px;line-height:12px;color:#222;">225.8</div>
<div class="r" style="left:3px;top:791px;width:30.0px;height:15px;background:#FFFFFF;"></div>
<div class="r" style="left:35px;top:791px;width:49.0px;height:15px;background:#FFFFFF;"></div>
<div class="r" style="left:86px;top:791px;width:148.5px;height:15px;background:#FFFFFF;"></div>
<div class="r" style="left:237.5px;top:791px;width:227.5px;height:15px;background:#FFFFFF;"></div>
<div class="r" style="left:468px;top:791px;width:120.0px;height:15px;background:#FFFFFF;"></div>
<div class="r" style="left:590.8px;top:791px;width:88.5px;height:15px;background:#FFFFFF;"></div>
<div class="r" style="left:681.2px;top:791px;width:29.5px;height:15px;background:#FFFFFF;"></div>
<div class="r" style="left:713.7px;top:791px;width:79.5px;height:15px;background:#FFFFFF;"></div>
<div class="r" style="left:795.2px;top:791px;width:28.5px;height:15px;background:#FFFFFF;"></div>
<div class="r" style="left:826.6px;top:791px;width:39.5px;height:15px;background:#FFFFFF;"></div>
<div class="r" style="left:868.3px;top:791px;width:29.5px;height:15px;background:#FFFFFF;"></div>
<div class="r" style="left:900.5px;top:791px;width:48.5px;height:15px;background:#FFFFFF;"></div>
<div class="r" style="left:951.3px;top:791px;width:69.5px;height:15px;background:#FFFFFF;"></div>
<div class="t" style="left:4px;top:793px;font-size:11px;line-height:12px;color:#222;">34</div>
<div class="t" style="left:87.2px;top:793px;font-size:11px;line-height:12px;color:#222;">92</div>
<svg class="r" style="left:238px;top:794px" width="11" height="11" viewBox="0 0 11 11" shape-rendering="crispEdges"><rect x="0" y="0" width="11" height="11" fill="#4A4AFF"/><rect x="1" y="1" width="9" height="9" fill="#0000FA"/><rect x="1" y="1" width="9" height="2" fill="#fff"/><rect x="1" y="2" width="1" height="1" fill="#E8E8FF"/><rect x="9" y="2" width="1" height="1" fill="#E8E8FF"/><rect x="4" y="3" width="3" height="5" fill="#fff"/><rect x="1" y="8" width="9" height="2" fill="#fff"/><rect x="1" y="9" width="9" height="1" fill="#E0E0FF"/></svg>
<div class="t" style="left:258px;top:793px;font-size:11px;line-height:12px;color:#222;">Tomas Christoffels (Dilsen-Stokkem)</div>
<div class="t" style="left:468.8px;top:793px;font-size:11px;line-height:12px;color:#222;">België</div>
<div class="t" style="left:591.8px;top:793px;font-size:11px;line-height:12px;color:#222;">17.3</div>
<svg class="r" style="left:681px;top:793px" width="9" height="12" viewBox="0 0 9 12"><path d="M4.5 0.4 V8" stroke="#FF0000" stroke-width="1.1"/><path d="M0.9 6.8 L4.5 11 L8.1 6.8 Z" fill="#FF0000"/></svg>
<div class="t" style="left:714.8px;top:793px;font-size:11px;line-height:12px;color:#222;">25</div>
<div class="t" style="left:827.5px;top:793px;font-size:11px;line-height:12px;color:#222;">278</div>
<div class="t" style="left:901.2px;top:793px;font-size:11px;line-height:12px;color:#222;">224.2</div>
<div class="r" style="left:3px;top:809px;width:30.0px;height:15px;background:#FFFFFF;"></div>
<div class="r" style="left:35px;top:809px;width:49.0px;height:15px;background:#FFFFFF;"></div>
<div class="r" style="left:86px;top:809px;width:148.5px;height:15px;background:#FFFFFF;"></div>
<div class="r" style="left:237.5px;top:809px;width:227.5px;height:15px;background:#FFFFFF;"></div>
<div class="r" style="left:468px;top:809px;width:120.0px;height:15px;background:#FFFFFF;"></div>
<div class="r" style="left:590.8px;top:809px;width:88.5px;height:15px;background:#FFFFFF;"></div>
<div class="r" style="left:681.2px;top:809px;width:29.5px;height:15px;background:#FFFFFF;"></div>
<div class="r" style="left:713.7px;top:809px;width:79.5px;height:15px;background:#FFFFFF;"></div>
<div class="r" style="left:795.2px;top:809px;width:28.5px;height:15px;background:#FFFFFF;"></div>
<div class="r" style="left:826.6px;top:809px;width:39.5px;height:15px;background:#FFFFFF;"></div>
<div class="r" style="left:868.3px;top:809px;width:29.5px;height:15px;background:#FFFFFF;"></div>
<div class="r" style="left:900.5px;top:809px;width:48.5px;height:15px;background:#FFFFFF;"></div>
<div class="r" style="left:951.3px;top:809px;width:69.5px;height:15px;background:#FFFFFF;"></div>
<div class="t" style="left:4px;top:810px;font-size:11px;line-height:12px;color:#222;">35</div>
<svg class="r" style="left:35px;top:810px" width="9" height="12" viewBox="0 0 9 12"><path d="M4.5 0.4 V8" stroke="#FF0000" stroke-width="1.1"/><path d="M0.9 6.8 L4.5 11 L8.1 6.8 Z" fill="#FF0000"/></svg>
<div class="t" style="left:45.8px;top:811px;font-size:11px;line-height:12px;color:#222;">(-13)</div>
<div class="t" style="left:87.2px;top:810px;font-size:11px;line-height:12px;color:#222;">74</div>
<svg class="r" style="left:238px;top:812px" width="11" height="11" viewBox="0 0 11 11" shape-rendering="crispEdges"><rect x="0" y="0" width="11" height="11" fill="#4A4AFF"/><rect x="1" y="1" width="9" height="9" fill="#0000FA"/><rect x="1" y="1" width="9" height="2" fill="#fff"/><rect x="1" y="2" width="1" height="1" fill="#E8E8FF"/><rect x="9" y="2" width="1" height="1" fill="#E8E8FF"/><rect x="4" y="3" width="3" height="5" fill="#fff"/><rect x="1" y="8" width="9" height="2" fill="#fff"/><rect x="1" y="9" width="9" height="1" fill="#E0E0FF"/></svg>
<div class="t" style="left:258px;top:810px;font-size:11px;line-height:12px;color:#222;">Wilco (Zevenhuizen)</div>
<div class="t" style="left:468.8px;top:810px;font-size:11px;line-height:12px;color:#222;">Nederland</div>
<div class="t" style="left:591.8px;top:810px;font-size:11px;line-height:12px;color:#222;">17.0</div>
<svg class="r" style="left:681px;top:811px" width="9" height="12" viewBox="0 0 9 12"><path d="M4.5 0.4 V8" stroke="#FF0000" stroke-width="1.1"/><path d="M0.9 6.8 L4.5 11 L8.1 6.8 Z" fill="#FF0000"/></svg>
<div class="t" style="left:714.8px;top:810px;font-size:11px;line-height:12px;color:#222;">55</div>
<div class="t" style="left:827.5px;top:810px;font-size:11px;line-height:12px;color:#222;">220</div>
<div class="t" style="left:901.2px;top:810px;font-size:11px;line-height:12px;color:#222;">224.1</div>
<svg class="r" style="left:0;top:0" width="1024" height="827" viewBox="0 0 1024 827"><path d="M278.00 97.60 C277.50 98.18 275.67 99.80 275.00 101.10 C274.33 102.40 274.05 104.10 274.00 105.40 C273.95 106.70 274.30 107.97 274.70 108.90 C275.10 109.83 275.63 110.07 276.40 111.00 C277.17 111.93 278.00 113.27 279.30 114.50 C280.60 115.73 281.98 117.35 284.20 118.40 C286.42 119.45 289.43 120.10 292.60 120.80 C295.77 121.50 299.68 122.37 303.20 122.60 C306.72 122.83 310.18 122.62 313.70 122.20 C317.22 121.78 321.37 121.15 324.30 120.10 C327.23 119.05 329.43 117.53 331.30 115.90 C333.17 114.27 334.73 112.17 335.50 110.30 C336.27 108.43 336.37 106.35 335.90 104.70 C335.43 103.05 334.05 101.35 332.70 100.40 C331.35 99.45 330.38 99.47 327.80 99.00 C325.22 98.53 320.72 98.00 317.20 97.60 C313.68 97.20 310.22 96.83 306.70 96.60 C303.18 96.37 299.27 96.15 296.10 96.20 C292.93 96.25 290.42 96.40 287.70 96.90 C284.98 97.40 281.12 98.82 279.80 99.20 " fill="none" stroke="#FF0A0A" stroke-width="1.9" stroke-linecap="round"/><path d="M744.50 115.20 C745.17 115.04 746.27 114.52 748.50 114.25 C750.73 113.98 754.77 113.60 757.90 113.60 C761.02 113.60 764.13 113.88 767.25 114.25 C770.37 114.62 773.27 115.27 776.60 115.80 C779.93 116.33 784.85 116.62 787.25 117.40 C789.65 118.18 790.17 119.25 791.00 120.50 C791.83 121.75 792.25 123.44 792.25 124.90 C792.25 126.36 791.83 128.17 791.00 129.25 C790.17 130.33 789.12 130.83 787.25 131.40 C785.38 131.97 782.56 132.33 779.75 132.70 C776.94 133.07 773.52 133.45 770.40 133.60 C767.27 133.75 764.13 133.75 761.00 133.60 C757.87 133.45 754.10 133.17 751.60 132.70 C749.10 132.23 747.35 131.79 746.00 130.80 C744.65 129.81 744.07 128.26 743.50 126.75 C742.93 125.24 742.70 123.31 742.60 121.75 C742.50 120.19 742.57 118.56 742.90 117.40 C743.23 116.24 744.32 115.23 744.60 114.80 " fill="none" stroke="#FF0A0A" stroke-width="1.9" stroke-linecap="round"/></svg>
</body></html>
